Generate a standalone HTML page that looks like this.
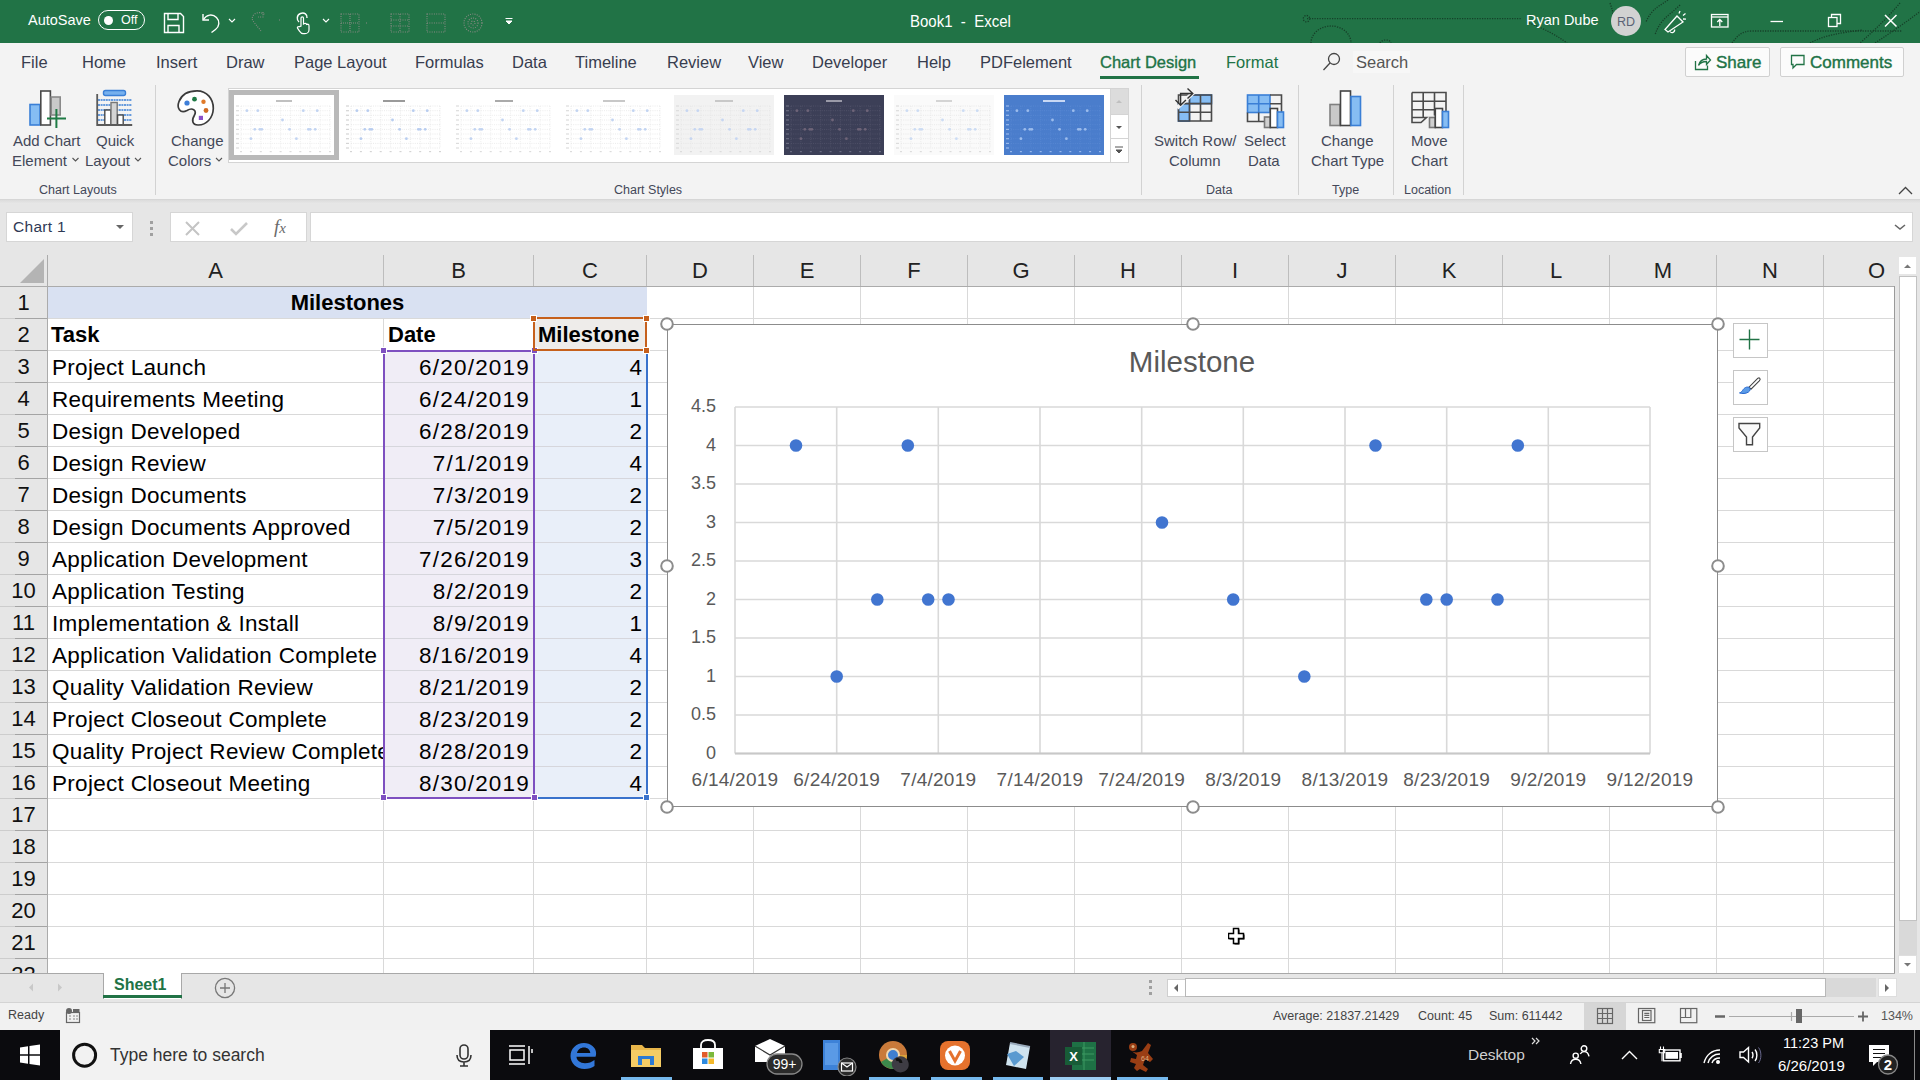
<!DOCTYPE html><html><head><meta charset="utf-8"><style>
*{margin:0;padding:0;box-sizing:border-box}
html,body{width:1920px;height:1080px;overflow:hidden;background:#fff;font-family:"Liberation Sans", sans-serif}
.a{position:absolute}
.t{position:absolute;white-space:nowrap;line-height:1}
</style></head><body><div class="a" style="left:0;top:0;width:1920px;height:43px;background:#217346"></div>
<div class="t" style="left:28px;top:13px;font-size:14.5px;color:#fff">AutoSave</div>
<div class="a" style="left:98px;top:10px;width:47px;height:20px;border:1.5px solid #fff;border-radius:10px"></div>
<div class="a" style="left:104px;top:15.5px;width:9px;height:9px;border-radius:50%;background:#fff"></div>
<div class="t" style="left:121px;top:14px;font-size:12.5px;color:#fff">Off</div>
<svg class="a" style="left:160px;top:8px" width="360" height="28" viewBox="160 8 360 28">
<g fill="none" stroke="#fff" stroke-width="1.4">
<path d="M164.5 13.5h16l3 3v16h-19z"/><path d="M168 13.5v6h10v-6"/><path d="M168 32.5v-7h11v7"/>
<path d="M203 14v6h6"/><path d="M203.5 19.5c3-5 9-6 13-2 3.5 3.5 3 9-1 12l-4 3"/>
<path d="M229 19l3 3 3-3" stroke-width="1.1"/>
<path d="M323 19l3 3 3-3" stroke-width="1.1"/>
<path d="M299 22c-2.5-2-2.5-7 1.5-8.5s7 1 6.5 4.5"/><path d="M301 26v-8c0-1.5 2.5-1.5 2.5 0v6l1-0.5c1-0.3 2 0 2 1l1-.3c1 0 1.5.6 1.5 1.5v4c0 2-1.5 4-4 4h-2c-1.5 0-2.5-1-3.5-2.5l-2-3c-.5-1 .5-2 1.5-1.3z" stroke-width="1.2"/>
</g>
<g fill="none" stroke="#9a8f8f" stroke-width="1.1" stroke-dasharray="1 1.3" opacity=".85">
<path d="M261 31l-8-10c-2-3 0-7 4-8 3-1 6 0 8 2"/><path d="M263 12v5h-5"/><path d="M279 20h2"/>
<rect x="341" y="14" width="18" height="18"/><path d="M341 23h18M350 14v18" stroke-dasharray="1 1"/>
<rect x="391" y="14" width="18" height="18"/><path d="M391 20h18M391 26h18M400 14v18"/>
<rect x="427" y="14" width="18" height="18"/><path d="M427 23h18"/>
<circle cx="473" cy="23" r="9"/><circle cx="473" cy="23" r="5"/><circle cx="473" cy="23" r="2"/>
<path d="M366 23h2"/>
</g>
<path d="M505.5 18.5h7M506 21h6l-3 3z" fill="#fff" stroke="#fff" stroke-width="1"/>
</svg>
<div class="t" style="left:910px;top:12.5px;font-size:15px;color:#fff;white-space:pre;transform:scaleY(1.1);transform-origin:0 0">Book1  -  Excel</div>
<svg class="a" style="left:1280px;top:0" width="640" height="43">
<g fill="none" stroke="#163f28" stroke-width="1.3" stroke-dasharray="1.2 1.3">
<path d="M27 18.7h215"/><circle cx="26.5" cy="18.7" r="3.2"/>
<path d="M31 43a20 17 0 0 1 40 0"/><path d="M100 43c2-4 10-4 11 0"/>
<path d="M388 0c-8 6-16 8-22 22M400 5c-10 10-20 14-25 30M330 3c2 6 4 10 2 16"/>
<path d="M247 22c10 4 25 10 40 21"/>
<path d="M452 43c6-8 10-12 20-12h150"/><path d="M620 3c-12 14-24 26-40 40"/><path d="M655 0c-20 16-40 30-60 43"/>
<path d="M530 43c15-8 30-10 52-13"/>
</g></svg>
<div class="t" style="left:1526px;top:13px;font-size:14.5px;color:#fff">Ryan Dube</div>
<div class="a" style="left:1611px;top:6px;width:30px;height:30px;border-radius:50%;background:#d2d2d2"></div>
<div class="t" style="left:1614px;top:16px;font-size:12.5px;color:#5b6275;width:24px;text-align:center">RD</div>
<svg class="a" style="left:1650px;top:0" width="270" height="43">
<g fill="none" stroke="#fff" stroke-width="1.3">
<path d="M15 29.5l12-13.5 6 6-15 10z"/><path d="M20 31.5a2.5 2.5 0 0 0 4.5-2"/><path d="M29 13.5l1-2.5M33 15.5l2.5-2M33 19l3 .2"/>
<rect x="61.5" y="14.5" width="16.5" height="12.5"/><path d="M61.5 17h16.5"/><path d="M69.8 26v-6.5M67.3 22l2.5-2.5 2.5 2.5"/>
<path d="M120.5 21.5h12.5"/>
<rect x="178.5" y="17.5" width="8.5" height="9"/><path d="M181.5 17.5v-3h9v9h-3.5"/>
<path d="M235 15l11.5 11.5M246.5 15l-11.5 11.5" stroke-width="1.5"/>
</g></svg>
<div class="a" style="left:0;top:43px;width:1920px;height:156px;background:#f3f3f3"></div>
<div class="t" style="left:21px;top:54px;font-size:16.5px;color:#383d4f">File</div>
<div class="t" style="left:82px;top:54px;font-size:16.5px;color:#383d4f">Home</div>
<div class="t" style="left:156px;top:54px;font-size:16.5px;color:#383d4f">Insert</div>
<div class="t" style="left:226px;top:54px;font-size:16.5px;color:#383d4f">Draw</div>
<div class="t" style="left:294px;top:54px;font-size:16.5px;color:#383d4f">Page Layout</div>
<div class="t" style="left:415px;top:54px;font-size:16.5px;color:#383d4f">Formulas</div>
<div class="t" style="left:512px;top:54px;font-size:16.5px;color:#383d4f">Data</div>
<div class="t" style="left:575px;top:54px;font-size:16.5px;color:#383d4f">Timeline</div>
<div class="t" style="left:667px;top:54px;font-size:16.5px;color:#383d4f">Review</div>
<div class="t" style="left:748px;top:54px;font-size:16.5px;color:#383d4f">View</div>
<div class="t" style="left:812px;top:54px;font-size:16.5px;color:#383d4f">Developer</div>
<div class="t" style="left:917px;top:54px;font-size:16.5px;color:#383d4f">Help</div>
<div class="t" style="left:980px;top:54px;font-size:16.5px;color:#383d4f">PDFelement</div>
<div class="t" style="left:1100px;top:54px;font-size:16.5px;color:#217346;-webkit-text-stroke:0.35px #217346">Chart Design</div>
<div class="a" style="left:1100px;top:76px;width:99px;height:3px;background:#217346"></div>
<div class="t" style="left:1226px;top:54px;font-size:16.5px;color:#217346">Format</div>
<svg class="a" style="left:1320px;top:50px" width="24" height="24"><g fill="none" stroke="#444" stroke-width="1.3"><circle cx="14" cy="9" r="5.5"/><path d="M10 13l-6.5 7"/></g></svg>
<div class="a" style="left:1353px;top:51px;width:57px;height:22px;background:#f7f7f7"></div>
<div class="t" style="left:1356px;top:54px;font-size:16.5px;color:#555">Search</div>
<div class="a" style="left:1685px;top:47px;width:85px;height:30px;border:1px solid #d0d0d0;background:#fbfbfb;border-radius:2px"></div>
<svg class="a" style="left:1692px;top:51px" width="22" height="22"><g fill="none" stroke="#217346" stroke-width="1.3"><path d="M3.5 10v8.5h12v-4"/><path d="M6.5 14.5c1-4 4-6.5 8-6.5V4.5l4 4.5-4 4.5v-3c-3.5 0-6.5 1.5-8 4z"/></g></svg>
<div class="t" style="left:1716px;top:54px;font-size:17px;color:#217346;-webkit-text-stroke:0.4px #217346">Share</div>
<div class="a" style="left:1780px;top:47px;width:124px;height:30px;border:1px solid #d0d0d0;background:#fbfbfb;border-radius:2px"></div>
<svg class="a" style="left:1789px;top:51px" width="22" height="22"><g fill="none" stroke="#217346" stroke-width="1.3"><path d="M2.5 4.5h12.5v9H7.5l-3.5 3.5v-3.5H2.5z"/></g></svg>
<div class="t" style="left:1810px;top:54px;font-size:17px;color:#217346;-webkit-text-stroke:0.4px #217346">Comments</div>
<div class="t" style="left:13px;top:133px;font-size:15px;color:#434859;">Add Chart</div>
<div class="t" style="left:12px;top:153px;font-size:15px;color:#434859;">Element</div>
<div class="t" style="left:96px;top:133px;font-size:15px;color:#434859;">Quick</div>
<div class="t" style="left:85px;top:153px;font-size:15px;color:#434859;">Layout</div>
<div class="t" style="left:171px;top:133px;font-size:15px;color:#434859;">Change</div>
<div class="t" style="left:168px;top:153px;font-size:15px;color:#434859;">Colors</div>
<div class="t" style="left:39px;top:184px;font-size:12.5px;color:#434859;">Chart Layouts</div>
<div class="t" style="left:614px;top:184px;font-size:12.5px;color:#434859;">Chart Styles</div>
<div class="t" style="left:1206px;top:184px;font-size:12.5px;color:#434859;">Data</div>
<div class="t" style="left:1332px;top:184px;font-size:12.5px;color:#434859;">Type</div>
<div class="t" style="left:1404px;top:184px;font-size:12.5px;color:#434859;">Location</div>
<div class="t" style="left:1154px;top:133px;font-size:15px;color:#434859;">Switch Row/</div>
<div class="t" style="left:1169px;top:153px;font-size:15px;color:#434859;">Column</div>
<div class="t" style="left:1244px;top:133px;font-size:15px;color:#434859;">Select</div>
<div class="t" style="left:1248px;top:153px;font-size:15px;color:#434859;">Data</div>
<div class="t" style="left:1321px;top:133px;font-size:15px;color:#434859;">Change</div>
<div class="t" style="left:1311px;top:153px;font-size:15px;color:#434859;">Chart Type</div>
<div class="t" style="left:1411px;top:133px;font-size:15px;color:#434859;">Move</div>
<div class="t" style="left:1411px;top:153px;font-size:15px;color:#434859;">Chart</div>
<svg class="a" style="left:0;top:84px" width="1920" height="116" viewBox="0 84 1920 116">
<g stroke-width="1.6">
<!-- Add chart element -->
<rect x="30" y="104.5" width="10" height="20.5" fill="#86bdf3" stroke="#3a7fd6"/>
<rect x="40.8" y="91" width="9.6" height="34" fill="#fff" stroke="#4a4a4a"/>
<rect x="51.2" y="97" width="9" height="18" fill="#c9c9c9" stroke="#8a8a8a"/>
<path d="M47 118.4h19M56.4 109v19" stroke="#1e7b45" stroke-width="2"/>
<!-- Quick layout -->
<rect x="103.5" y="90.5" width="22" height="5" rx="2" fill="#76b0ee" stroke="#3a7fd6" stroke-width="1.4"/>
<path d="M98 100h34M98 105h34M98 110h34M98 115h34M98 120h34" stroke="#3a7fd6" stroke-width="1.6" stroke-dasharray="2 0.6"/>
<rect x="104.8" y="110" width="6" height="15" fill="#fff" stroke="#4a4a4a" stroke-width="1.4"/>
<rect x="111" y="102.5" width="6.2" height="22.5" fill="#d4d4d4" stroke="#777" stroke-width="1.4"/>
<rect x="117.6" y="115" width="5.6" height="10" fill="#fff" stroke="#4a4a4a" stroke-width="1.4"/>
<path d="M97.2 94v31h35" fill="none" stroke="#5a5a5a" stroke-width="1.8"/>
<!-- Palette -->
<path d="M187 110.5C180 114 176.5 108 179 101.5C182 93.5 190 90.8 197 90.8C207 90.8 213.5 99 213.3 108.5C213 118.5 206 125 198.5 125C192 125.3 191.5 120 194.3 115.5C197 111 193 106.8 187 110.5Z" fill="#fff" stroke="#3b3b3b" stroke-width="1.7"/>
<circle cx="187" cy="103" r="2.6" fill="#3f7fd8" stroke="none"/>
<circle cx="194.5" cy="99.2" r="2.4" fill="#1f7a45" stroke="none"/>
<circle cx="203.5" cy="101.7" r="2.2" fill="#e07a2a" stroke="none"/>
<circle cx="206" cy="110.5" r="2.4" fill="#d06a22" stroke="none"/>
<rect x="198.8" y="115.8" width="4.2" height="4.2" fill="#8a4fc8" stroke="none"/>
<!-- separators -->
<path d="M155.5 85v110M1141.5 85v110M1298.5 85v110M1393.5 85v110M1463.5 85v110" stroke="#d2d2d2" stroke-width="1"/>
<!-- chevrons -->
<path d="M72.5 158l3 3 3-3" fill="none" stroke="#555" stroke-width="1.1"/><path d="M135 158l3 3 3-3" fill="none" stroke="#555" stroke-width="1.1"/><path d="M216 158l3 3 3-3" fill="none" stroke="#555" stroke-width="1.1"/>
<path d="M1899 194l6.5-6.5 6.5 6.5" fill="none" stroke="#444" stroke-width="1.3"/>
<!-- Switch row/column -->
<g stroke="#4a4a4a" stroke-width="1.6">
<rect x="1189.5" y="95" width="22" height="8.6" fill="#86bdf3" stroke="#3a7fd6"/>
<rect x="1178.5" y="103.6" width="11" height="17.5" fill="#86bdf3" stroke="#3a7fd6"/>
<path d="M1178.5 95h33v26h-33zM1189.5 95v26M1200.5 95v26M1178.5 103.6h33M1178.5 112.2h33" fill="none"/>
<path d="M1177 108l17-16" stroke="#f3f3f3" stroke-width="4"/>
<path d="M1180.6 105v-11.5h12.2M1187.5 88.5l5.3 5-5.3 5M1175.5 100l5.1 5.3 5.3-5.3" fill="none" stroke="#333" stroke-width="1.4"/>
<!-- select data -->
<rect x="1247.5" y="95" width="22.5" height="17.5" fill="#86bdf3" stroke="#3a7fd6"/>
<path d="M1258.7 95v17.5M1247.5 103.7h22.5" stroke="#3a7fd6"/>
<path d="M1270 95h11.5v17M1270 103.7h11.5M1247.5 112.5v9h17M1258.7 112.5v9" fill="none"/>
<rect x="1264.5" y="117" width="5.8" height="10.5" fill="#d0d0d0" stroke="#777"/>
<rect x="1270.3" y="108.5" width="7.2" height="19" fill="#fff" stroke="#444"/>
<rect x="1277.5" y="112" width="6" height="15.5" fill="#86bdf3" stroke="#3a7fd6"/>
<!-- change chart type -->
<rect x="1330" y="104.5" width="10" height="21" fill="#c9c9c9" stroke="#808080"/>
<rect x="1340.5" y="91" width="10" height="34.5" fill="#fff" stroke="#444"/>
<rect x="1351" y="96.5" width="9.5" height="29" fill="#86bdf3" stroke="#3a7fd6"/>
<!-- move chart -->
<path d="M1412 92.5h34v27M1412 92.5v30h9l5.5-5h-14.5M1423.2 92.5v25M1434.5 92.5v23M1412 101.2h34M1412 109.7h22" fill="none"/>
<rect x="1429.5" y="117.5" width="5.7" height="10" fill="#d0d0d0" stroke="#777"/>
<rect x="1435.3" y="108.5" width="7.2" height="19" fill="#fff" stroke="#444"/>
<rect x="1442.5" y="111.5" width="6" height="16" fill="#86bdf3" stroke="#3a7fd6"/>
</g>
</g>
</svg>
<div class="a" style="left:228px;top:88px;width:901px;height:75px;background:#fff;border:1px solid #d4d4d4"></div>
<div class="a" style="left:1110px;top:89px;width:18px;height:25px;background:#dcdcdc"></div>
<div class="a" style="left:1110px;top:89px;width:1px;height:73px;background:#d4d4d4"></div>
<div class="a" style="left:1110px;top:114px;width:18px;height:1px;background:#d4d4d4"></div>
<div class="a" style="left:1110px;top:138px;width:18px;height:1px;background:#d4d4d4"></div>
<svg class="a" style="left:1110px;top:89px" width="18" height="73"><path d="M6 14l3-3 3 3z" fill="#c0c0c0"/><path d="M6 37l3 3 3-3z" fill="#555"/><path d="M5 58h8M6 61l3 3 3-3z" fill="#555" stroke="#555" stroke-width="1"/></svg>
<div class="a" style="left:229px;top:90px;width:110px;height:70px;border:5px solid #b9b9b9"></div>
<svg class="a" style="left:234px;top:95px" width="100" height="60"><rect width="100" height="60" fill="#fff"/><rect x="42.0" y="5" width="16" height="2" fill="#c0c0c0"/><path d="M7 11.0h89" stroke="#e8e8e8" stroke-width="0.8" stroke-dasharray="1 1.2"/><rect x="2" y="10.4" width="3" height="1.2" fill="#dcdcdc"/><path d="M7 15.7h89" stroke="#e8e8e8" stroke-width="0.8" stroke-dasharray="1 1.2"/><rect x="2" y="15.1" width="3" height="1.2" fill="#dcdcdc"/><path d="M7 20.3h89" stroke="#e8e8e8" stroke-width="0.8" stroke-dasharray="1 1.2"/><rect x="2" y="19.7" width="3" height="1.2" fill="#dcdcdc"/><path d="M7 25.0h89" stroke="#e8e8e8" stroke-width="0.8" stroke-dasharray="1 1.2"/><rect x="2" y="24.4" width="3" height="1.2" fill="#dcdcdc"/><path d="M7 29.7h89" stroke="#e8e8e8" stroke-width="0.8" stroke-dasharray="1 1.2"/><rect x="2" y="29.1" width="3" height="1.2" fill="#dcdcdc"/><path d="M7 34.4h89" stroke="#e8e8e8" stroke-width="0.8" stroke-dasharray="1 1.2"/><rect x="2" y="33.8" width="3" height="1.2" fill="#dcdcdc"/><path d="M7 39.0h89" stroke="#e8e8e8" stroke-width="0.8" stroke-dasharray="1 1.2"/><rect x="2" y="38.4" width="3" height="1.2" fill="#dcdcdc"/><path d="M7 43.7h89" stroke="#e8e8e8" stroke-width="0.8" stroke-dasharray="1 1.2"/><rect x="2" y="43.1" width="3" height="1.2" fill="#dcdcdc"/><path d="M7 48.4h89" stroke="#e8e8e8" stroke-width="0.8" stroke-dasharray="1 1.2"/><rect x="2" y="47.8" width="3" height="1.2" fill="#dcdcdc"/><path d="M7 53.0h89" stroke="#e8e8e8" stroke-width="0.8" stroke-dasharray="1 1.2"/><rect x="2" y="52.4" width="3" height="1.2" fill="#dcdcdc"/><path d="M7.0 11v42" stroke="#e8e8e8" stroke-width="0.8" stroke-dasharray="1 1.2"/><rect x="6.0" y="56" width="2" height="1.2" fill="#dcdcdc"/><path d="M16.9 11v42" stroke="#e8e8e8" stroke-width="0.8" stroke-dasharray="1 1.2"/><rect x="15.9" y="56" width="2" height="1.2" fill="#dcdcdc"/><path d="M26.8 11v42" stroke="#e8e8e8" stroke-width="0.8" stroke-dasharray="1 1.2"/><rect x="25.8" y="56" width="2" height="1.2" fill="#dcdcdc"/><path d="M36.7 11v42" stroke="#e8e8e8" stroke-width="0.8" stroke-dasharray="1 1.2"/><rect x="35.7" y="56" width="2" height="1.2" fill="#dcdcdc"/><path d="M46.6 11v42" stroke="#e8e8e8" stroke-width="0.8" stroke-dasharray="1 1.2"/><rect x="45.6" y="56" width="2" height="1.2" fill="#dcdcdc"/><path d="M56.5 11v42" stroke="#e8e8e8" stroke-width="0.8" stroke-dasharray="1 1.2"/><rect x="55.5" y="56" width="2" height="1.2" fill="#dcdcdc"/><path d="M66.3 11v42" stroke="#e8e8e8" stroke-width="0.8" stroke-dasharray="1 1.2"/><rect x="65.3" y="56" width="2" height="1.2" fill="#dcdcdc"/><path d="M76.2 11v42" stroke="#e8e8e8" stroke-width="0.8" stroke-dasharray="1 1.2"/><rect x="75.2" y="56" width="2" height="1.2" fill="#dcdcdc"/><path d="M86.1 11v42" stroke="#e8e8e8" stroke-width="0.8" stroke-dasharray="1 1.2"/><rect x="85.1" y="56" width="2" height="1.2" fill="#dcdcdc"/><path d="M96.0 11v42" stroke="#e8e8e8" stroke-width="0.8" stroke-dasharray="1 1.2"/><rect x="95.0" y="56" width="2" height="1.2" fill="#dcdcdc"/><circle cx="12.9" cy="15.7" r="1.4" fill="#c2d4f2"/><circle cx="16.9" cy="43.7" r="1.4" fill="#c2d4f2"/><circle cx="20.8" cy="34.3" r="1.4" fill="#c2d4f2"/><circle cx="23.8" cy="15.7" r="1.4" fill="#c2d4f2"/><circle cx="25.8" cy="34.3" r="1.4" fill="#c2d4f2"/><circle cx="27.8" cy="34.3" r="1.4" fill="#c2d4f2"/><circle cx="48.5" cy="25.0" r="1.4" fill="#c2d4f2"/><circle cx="55.5" cy="34.3" r="1.4" fill="#c2d4f2"/><circle cx="62.4" cy="43.7" r="1.4" fill="#c2d4f2"/><circle cx="69.3" cy="15.7" r="1.4" fill="#c2d4f2"/><circle cx="74.3" cy="34.3" r="1.4" fill="#c2d4f2"/><circle cx="76.2" cy="34.3" r="1.4" fill="#c2d4f2"/><circle cx="81.2" cy="34.3" r="1.4" fill="#c2d4f2"/><circle cx="83.2" cy="15.7" r="1.4" fill="#c2d4f2"/></svg>
<svg class="a" style="left:344px;top:95px" width="100" height="60"><rect width="100" height="60" fill="#fff"/><rect x="39.0" y="5" width="22" height="2" fill="#9a9a9a"/><path d="M7 11.0h89" stroke="#e4e4e4" stroke-width="0.8" stroke-dasharray="1 1.2"/><rect x="2" y="10.4" width="3" height="1.2" fill="#d4d4d4"/><path d="M7 15.7h89" stroke="#e4e4e4" stroke-width="0.8" stroke-dasharray="1 1.2"/><rect x="2" y="15.1" width="3" height="1.2" fill="#d4d4d4"/><path d="M7 20.3h89" stroke="#e4e4e4" stroke-width="0.8" stroke-dasharray="1 1.2"/><rect x="2" y="19.7" width="3" height="1.2" fill="#d4d4d4"/><path d="M7 25.0h89" stroke="#e4e4e4" stroke-width="0.8" stroke-dasharray="1 1.2"/><rect x="2" y="24.4" width="3" height="1.2" fill="#d4d4d4"/><path d="M7 29.7h89" stroke="#e4e4e4" stroke-width="0.8" stroke-dasharray="1 1.2"/><rect x="2" y="29.1" width="3" height="1.2" fill="#d4d4d4"/><path d="M7 34.4h89" stroke="#e4e4e4" stroke-width="0.8" stroke-dasharray="1 1.2"/><rect x="2" y="33.8" width="3" height="1.2" fill="#d4d4d4"/><path d="M7 39.0h89" stroke="#e4e4e4" stroke-width="0.8" stroke-dasharray="1 1.2"/><rect x="2" y="38.4" width="3" height="1.2" fill="#d4d4d4"/><path d="M7 43.7h89" stroke="#e4e4e4" stroke-width="0.8" stroke-dasharray="1 1.2"/><rect x="2" y="43.1" width="3" height="1.2" fill="#d4d4d4"/><path d="M7 48.4h89" stroke="#e4e4e4" stroke-width="0.8" stroke-dasharray="1 1.2"/><rect x="2" y="47.8" width="3" height="1.2" fill="#d4d4d4"/><path d="M7 53.0h89" stroke="#e4e4e4" stroke-width="0.8" stroke-dasharray="1 1.2"/><rect x="2" y="52.4" width="3" height="1.2" fill="#d4d4d4"/><path d="M7.0 11v42" stroke="#e4e4e4" stroke-width="0.8" stroke-dasharray="1 1.2"/><rect x="6.0" y="56" width="2" height="1.2" fill="#d4d4d4"/><path d="M16.9 11v42" stroke="#e4e4e4" stroke-width="0.8" stroke-dasharray="1 1.2"/><rect x="15.9" y="56" width="2" height="1.2" fill="#d4d4d4"/><path d="M26.8 11v42" stroke="#e4e4e4" stroke-width="0.8" stroke-dasharray="1 1.2"/><rect x="25.8" y="56" width="2" height="1.2" fill="#d4d4d4"/><path d="M36.7 11v42" stroke="#e4e4e4" stroke-width="0.8" stroke-dasharray="1 1.2"/><rect x="35.7" y="56" width="2" height="1.2" fill="#d4d4d4"/><path d="M46.6 11v42" stroke="#e4e4e4" stroke-width="0.8" stroke-dasharray="1 1.2"/><rect x="45.6" y="56" width="2" height="1.2" fill="#d4d4d4"/><path d="M56.5 11v42" stroke="#e4e4e4" stroke-width="0.8" stroke-dasharray="1 1.2"/><rect x="55.5" y="56" width="2" height="1.2" fill="#d4d4d4"/><path d="M66.3 11v42" stroke="#e4e4e4" stroke-width="0.8" stroke-dasharray="1 1.2"/><rect x="65.3" y="56" width="2" height="1.2" fill="#d4d4d4"/><path d="M76.2 11v42" stroke="#e4e4e4" stroke-width="0.8" stroke-dasharray="1 1.2"/><rect x="75.2" y="56" width="2" height="1.2" fill="#d4d4d4"/><path d="M86.1 11v42" stroke="#e4e4e4" stroke-width="0.8" stroke-dasharray="1 1.2"/><rect x="85.1" y="56" width="2" height="1.2" fill="#d4d4d4"/><path d="M96.0 11v42" stroke="#e4e4e4" stroke-width="0.8" stroke-dasharray="1 1.2"/><rect x="95.0" y="56" width="2" height="1.2" fill="#d4d4d4"/><circle cx="12.9" cy="15.7" r="1.4" fill="#b8cdf0"/><circle cx="16.9" cy="43.7" r="1.4" fill="#b8cdf0"/><circle cx="20.8" cy="34.3" r="1.4" fill="#b8cdf0"/><circle cx="23.8" cy="15.7" r="1.4" fill="#b8cdf0"/><circle cx="25.8" cy="34.3" r="1.4" fill="#b8cdf0"/><circle cx="27.8" cy="34.3" r="1.4" fill="#b8cdf0"/><circle cx="48.5" cy="25.0" r="1.4" fill="#b8cdf0"/><circle cx="55.5" cy="34.3" r="1.4" fill="#b8cdf0"/><circle cx="62.4" cy="43.7" r="1.4" fill="#b8cdf0"/><circle cx="69.3" cy="15.7" r="1.4" fill="#b8cdf0"/><circle cx="74.3" cy="34.3" r="1.4" fill="#b8cdf0"/><circle cx="76.2" cy="34.3" r="1.4" fill="#b8cdf0"/><circle cx="81.2" cy="34.3" r="1.4" fill="#b8cdf0"/><circle cx="83.2" cy="15.7" r="1.4" fill="#b8cdf0"/></svg>
<svg class="a" style="left:454px;top:95px" width="100" height="60"><rect width="100" height="60" fill="#fff"/><rect x="41.0" y="5" width="18" height="2" fill="#aaaaaa"/><path d="M7 11.0h89" stroke="#e8e8e8" stroke-width="0.8" stroke-dasharray="1 1.2"/><rect x="2" y="10.4" width="3" height="1.2" fill="#dcdcdc"/><path d="M7 15.7h89" stroke="#e8e8e8" stroke-width="0.8" stroke-dasharray="1 1.2"/><rect x="2" y="15.1" width="3" height="1.2" fill="#dcdcdc"/><path d="M7 20.3h89" stroke="#e8e8e8" stroke-width="0.8" stroke-dasharray="1 1.2"/><rect x="2" y="19.7" width="3" height="1.2" fill="#dcdcdc"/><path d="M7 25.0h89" stroke="#e8e8e8" stroke-width="0.8" stroke-dasharray="1 1.2"/><rect x="2" y="24.4" width="3" height="1.2" fill="#dcdcdc"/><path d="M7 29.7h89" stroke="#e8e8e8" stroke-width="0.8" stroke-dasharray="1 1.2"/><rect x="2" y="29.1" width="3" height="1.2" fill="#dcdcdc"/><path d="M7 34.4h89" stroke="#e8e8e8" stroke-width="0.8" stroke-dasharray="1 1.2"/><rect x="2" y="33.8" width="3" height="1.2" fill="#dcdcdc"/><path d="M7 39.0h89" stroke="#e8e8e8" stroke-width="0.8" stroke-dasharray="1 1.2"/><rect x="2" y="38.4" width="3" height="1.2" fill="#dcdcdc"/><path d="M7 43.7h89" stroke="#e8e8e8" stroke-width="0.8" stroke-dasharray="1 1.2"/><rect x="2" y="43.1" width="3" height="1.2" fill="#dcdcdc"/><path d="M7 48.4h89" stroke="#e8e8e8" stroke-width="0.8" stroke-dasharray="1 1.2"/><rect x="2" y="47.8" width="3" height="1.2" fill="#dcdcdc"/><path d="M7 53.0h89" stroke="#e8e8e8" stroke-width="0.8" stroke-dasharray="1 1.2"/><rect x="2" y="52.4" width="3" height="1.2" fill="#dcdcdc"/><path d="M7.0 11v42" stroke="#e8e8e8" stroke-width="0.8" stroke-dasharray="1 1.2"/><rect x="6.0" y="56" width="2" height="1.2" fill="#dcdcdc"/><path d="M16.9 11v42" stroke="#e8e8e8" stroke-width="0.8" stroke-dasharray="1 1.2"/><rect x="15.9" y="56" width="2" height="1.2" fill="#dcdcdc"/><path d="M26.8 11v42" stroke="#e8e8e8" stroke-width="0.8" stroke-dasharray="1 1.2"/><rect x="25.8" y="56" width="2" height="1.2" fill="#dcdcdc"/><path d="M36.7 11v42" stroke="#e8e8e8" stroke-width="0.8" stroke-dasharray="1 1.2"/><rect x="35.7" y="56" width="2" height="1.2" fill="#dcdcdc"/><path d="M46.6 11v42" stroke="#e8e8e8" stroke-width="0.8" stroke-dasharray="1 1.2"/><rect x="45.6" y="56" width="2" height="1.2" fill="#dcdcdc"/><path d="M56.5 11v42" stroke="#e8e8e8" stroke-width="0.8" stroke-dasharray="1 1.2"/><rect x="55.5" y="56" width="2" height="1.2" fill="#dcdcdc"/><path d="M66.3 11v42" stroke="#e8e8e8" stroke-width="0.8" stroke-dasharray="1 1.2"/><rect x="65.3" y="56" width="2" height="1.2" fill="#dcdcdc"/><path d="M76.2 11v42" stroke="#e8e8e8" stroke-width="0.8" stroke-dasharray="1 1.2"/><rect x="75.2" y="56" width="2" height="1.2" fill="#dcdcdc"/><path d="M86.1 11v42" stroke="#e8e8e8" stroke-width="0.8" stroke-dasharray="1 1.2"/><rect x="85.1" y="56" width="2" height="1.2" fill="#dcdcdc"/><path d="M96.0 11v42" stroke="#e8e8e8" stroke-width="0.8" stroke-dasharray="1 1.2"/><rect x="95.0" y="56" width="2" height="1.2" fill="#dcdcdc"/><circle cx="12.9" cy="15.7" r="1.4" fill="#c2d4f2"/><circle cx="16.9" cy="43.7" r="1.4" fill="#c2d4f2"/><circle cx="20.8" cy="34.3" r="1.4" fill="#c2d4f2"/><circle cx="23.8" cy="15.7" r="1.4" fill="#c2d4f2"/><circle cx="25.8" cy="34.3" r="1.4" fill="#c2d4f2"/><circle cx="27.8" cy="34.3" r="1.4" fill="#c2d4f2"/><circle cx="48.5" cy="25.0" r="1.4" fill="#c2d4f2"/><circle cx="55.5" cy="34.3" r="1.4" fill="#c2d4f2"/><circle cx="62.4" cy="43.7" r="1.4" fill="#c2d4f2"/><circle cx="69.3" cy="15.7" r="1.4" fill="#c2d4f2"/><circle cx="74.3" cy="34.3" r="1.4" fill="#c2d4f2"/><circle cx="76.2" cy="34.3" r="1.4" fill="#c2d4f2"/><circle cx="81.2" cy="34.3" r="1.4" fill="#c2d4f2"/><circle cx="83.2" cy="15.7" r="1.4" fill="#c2d4f2"/></svg>
<svg class="a" style="left:564px;top:95px" width="100" height="60"><rect width="100" height="60" fill="#fff"/><rect x="39.0" y="5" width="22" height="2" fill="#c8c8c8"/><path d="M7 11.0h89" stroke="#e6e6e6" stroke-width="0.8" stroke-dasharray="1 1.2"/><rect x="2" y="10.4" width="3" height="1.2" fill="#dcdcdc"/><path d="M7 15.7h89" stroke="#e6e6e6" stroke-width="0.8" stroke-dasharray="1 1.2"/><rect x="2" y="15.1" width="3" height="1.2" fill="#dcdcdc"/><path d="M7 20.3h89" stroke="#e6e6e6" stroke-width="0.8" stroke-dasharray="1 1.2"/><rect x="2" y="19.7" width="3" height="1.2" fill="#dcdcdc"/><path d="M7 25.0h89" stroke="#e6e6e6" stroke-width="0.8" stroke-dasharray="1 1.2"/><rect x="2" y="24.4" width="3" height="1.2" fill="#dcdcdc"/><path d="M7 29.7h89" stroke="#e6e6e6" stroke-width="0.8" stroke-dasharray="1 1.2"/><rect x="2" y="29.1" width="3" height="1.2" fill="#dcdcdc"/><path d="M7 34.4h89" stroke="#e6e6e6" stroke-width="0.8" stroke-dasharray="1 1.2"/><rect x="2" y="33.8" width="3" height="1.2" fill="#dcdcdc"/><path d="M7 39.0h89" stroke="#e6e6e6" stroke-width="0.8" stroke-dasharray="1 1.2"/><rect x="2" y="38.4" width="3" height="1.2" fill="#dcdcdc"/><path d="M7 43.7h89" stroke="#e6e6e6" stroke-width="0.8" stroke-dasharray="1 1.2"/><rect x="2" y="43.1" width="3" height="1.2" fill="#dcdcdc"/><path d="M7 48.4h89" stroke="#e6e6e6" stroke-width="0.8" stroke-dasharray="1 1.2"/><rect x="2" y="47.8" width="3" height="1.2" fill="#dcdcdc"/><path d="M7 53.0h89" stroke="#e6e6e6" stroke-width="0.8" stroke-dasharray="1 1.2"/><rect x="2" y="52.4" width="3" height="1.2" fill="#dcdcdc"/><path d="M7.0 11v42" stroke="#e6e6e6" stroke-width="0.8" stroke-dasharray="1 1.2"/><rect x="6.0" y="56" width="2" height="1.2" fill="#dcdcdc"/><path d="M16.9 11v42" stroke="#e6e6e6" stroke-width="0.8" stroke-dasharray="1 1.2"/><rect x="15.9" y="56" width="2" height="1.2" fill="#dcdcdc"/><path d="M26.8 11v42" stroke="#e6e6e6" stroke-width="0.8" stroke-dasharray="1 1.2"/><rect x="25.8" y="56" width="2" height="1.2" fill="#dcdcdc"/><path d="M36.7 11v42" stroke="#e6e6e6" stroke-width="0.8" stroke-dasharray="1 1.2"/><rect x="35.7" y="56" width="2" height="1.2" fill="#dcdcdc"/><path d="M46.6 11v42" stroke="#e6e6e6" stroke-width="0.8" stroke-dasharray="1 1.2"/><rect x="45.6" y="56" width="2" height="1.2" fill="#dcdcdc"/><path d="M56.5 11v42" stroke="#e6e6e6" stroke-width="0.8" stroke-dasharray="1 1.2"/><rect x="55.5" y="56" width="2" height="1.2" fill="#dcdcdc"/><path d="M66.3 11v42" stroke="#e6e6e6" stroke-width="0.8" stroke-dasharray="1 1.2"/><rect x="65.3" y="56" width="2" height="1.2" fill="#dcdcdc"/><path d="M76.2 11v42" stroke="#e6e6e6" stroke-width="0.8" stroke-dasharray="1 1.2"/><rect x="75.2" y="56" width="2" height="1.2" fill="#dcdcdc"/><path d="M86.1 11v42" stroke="#e6e6e6" stroke-width="0.8" stroke-dasharray="1 1.2"/><rect x="85.1" y="56" width="2" height="1.2" fill="#dcdcdc"/><path d="M96.0 11v42" stroke="#e6e6e6" stroke-width="0.8" stroke-dasharray="1 1.2"/><rect x="95.0" y="56" width="2" height="1.2" fill="#dcdcdc"/><circle cx="12.9" cy="15.7" r="1.4" fill="#c2d4f2"/><circle cx="16.9" cy="43.7" r="1.4" fill="#c2d4f2"/><circle cx="20.8" cy="34.3" r="1.4" fill="#c2d4f2"/><circle cx="23.8" cy="15.7" r="1.4" fill="#c2d4f2"/><circle cx="25.8" cy="34.3" r="1.4" fill="#c2d4f2"/><circle cx="27.8" cy="34.3" r="1.4" fill="#c2d4f2"/><circle cx="48.5" cy="25.0" r="1.4" fill="#c2d4f2"/><circle cx="55.5" cy="34.3" r="1.4" fill="#c2d4f2"/><circle cx="62.4" cy="43.7" r="1.4" fill="#c2d4f2"/><circle cx="69.3" cy="15.7" r="1.4" fill="#c2d4f2"/><circle cx="74.3" cy="34.3" r="1.4" fill="#c2d4f2"/><circle cx="76.2" cy="34.3" r="1.4" fill="#c2d4f2"/><circle cx="81.2" cy="34.3" r="1.4" fill="#c2d4f2"/><circle cx="83.2" cy="15.7" r="1.4" fill="#c2d4f2"/></svg>
<svg class="a" style="left:674px;top:95px" width="100" height="60"><rect width="100" height="60" fill="#f2f2f2"/><rect x="41.0" y="5" width="18" height="2" fill="#c8c8c8"/><path d="M7 11.0h89" stroke="#e4e4e4" stroke-width="0.8" stroke-dasharray="1 1.2"/><rect x="2" y="10.4" width="3" height="1.2" fill="#dcdcdc"/><path d="M7 15.7h89" stroke="#e4e4e4" stroke-width="0.8" stroke-dasharray="1 1.2"/><rect x="2" y="15.1" width="3" height="1.2" fill="#dcdcdc"/><path d="M7 20.3h89" stroke="#e4e4e4" stroke-width="0.8" stroke-dasharray="1 1.2"/><rect x="2" y="19.7" width="3" height="1.2" fill="#dcdcdc"/><path d="M7 25.0h89" stroke="#e4e4e4" stroke-width="0.8" stroke-dasharray="1 1.2"/><rect x="2" y="24.4" width="3" height="1.2" fill="#dcdcdc"/><path d="M7 29.7h89" stroke="#e4e4e4" stroke-width="0.8" stroke-dasharray="1 1.2"/><rect x="2" y="29.1" width="3" height="1.2" fill="#dcdcdc"/><path d="M7 34.4h89" stroke="#e4e4e4" stroke-width="0.8" stroke-dasharray="1 1.2"/><rect x="2" y="33.8" width="3" height="1.2" fill="#dcdcdc"/><path d="M7 39.0h89" stroke="#e4e4e4" stroke-width="0.8" stroke-dasharray="1 1.2"/><rect x="2" y="38.4" width="3" height="1.2" fill="#dcdcdc"/><path d="M7 43.7h89" stroke="#e4e4e4" stroke-width="0.8" stroke-dasharray="1 1.2"/><rect x="2" y="43.1" width="3" height="1.2" fill="#dcdcdc"/><path d="M7 48.4h89" stroke="#e4e4e4" stroke-width="0.8" stroke-dasharray="1 1.2"/><rect x="2" y="47.8" width="3" height="1.2" fill="#dcdcdc"/><path d="M7 53.0h89" stroke="#e4e4e4" stroke-width="0.8" stroke-dasharray="1 1.2"/><rect x="2" y="52.4" width="3" height="1.2" fill="#dcdcdc"/><path d="M7.0 11v42" stroke="#e4e4e4" stroke-width="0.8" stroke-dasharray="1 1.2"/><rect x="6.0" y="56" width="2" height="1.2" fill="#dcdcdc"/><path d="M16.9 11v42" stroke="#e4e4e4" stroke-width="0.8" stroke-dasharray="1 1.2"/><rect x="15.9" y="56" width="2" height="1.2" fill="#dcdcdc"/><path d="M26.8 11v42" stroke="#e4e4e4" stroke-width="0.8" stroke-dasharray="1 1.2"/><rect x="25.8" y="56" width="2" height="1.2" fill="#dcdcdc"/><path d="M36.7 11v42" stroke="#e4e4e4" stroke-width="0.8" stroke-dasharray="1 1.2"/><rect x="35.7" y="56" width="2" height="1.2" fill="#dcdcdc"/><path d="M46.6 11v42" stroke="#e4e4e4" stroke-width="0.8" stroke-dasharray="1 1.2"/><rect x="45.6" y="56" width="2" height="1.2" fill="#dcdcdc"/><path d="M56.5 11v42" stroke="#e4e4e4" stroke-width="0.8" stroke-dasharray="1 1.2"/><rect x="55.5" y="56" width="2" height="1.2" fill="#dcdcdc"/><path d="M66.3 11v42" stroke="#e4e4e4" stroke-width="0.8" stroke-dasharray="1 1.2"/><rect x="65.3" y="56" width="2" height="1.2" fill="#dcdcdc"/><path d="M76.2 11v42" stroke="#e4e4e4" stroke-width="0.8" stroke-dasharray="1 1.2"/><rect x="75.2" y="56" width="2" height="1.2" fill="#dcdcdc"/><path d="M86.1 11v42" stroke="#e4e4e4" stroke-width="0.8" stroke-dasharray="1 1.2"/><rect x="85.1" y="56" width="2" height="1.2" fill="#dcdcdc"/><path d="M96.0 11v42" stroke="#e4e4e4" stroke-width="0.8" stroke-dasharray="1 1.2"/><rect x="95.0" y="56" width="2" height="1.2" fill="#dcdcdc"/><circle cx="12.9" cy="15.7" r="1.4" fill="#c6d6f2"/><circle cx="16.9" cy="43.7" r="1.4" fill="#c6d6f2"/><circle cx="20.8" cy="34.3" r="1.4" fill="#c6d6f2"/><circle cx="23.8" cy="15.7" r="1.4" fill="#c6d6f2"/><circle cx="25.8" cy="34.3" r="1.4" fill="#c6d6f2"/><circle cx="27.8" cy="34.3" r="1.4" fill="#c6d6f2"/><circle cx="48.5" cy="25.0" r="1.4" fill="#c6d6f2"/><circle cx="55.5" cy="34.3" r="1.4" fill="#c6d6f2"/><circle cx="62.4" cy="43.7" r="1.4" fill="#c6d6f2"/><circle cx="69.3" cy="15.7" r="1.4" fill="#c6d6f2"/><circle cx="74.3" cy="34.3" r="1.4" fill="#c6d6f2"/><circle cx="76.2" cy="34.3" r="1.4" fill="#c6d6f2"/><circle cx="81.2" cy="34.3" r="1.4" fill="#c6d6f2"/><circle cx="83.2" cy="15.7" r="1.4" fill="#c6d6f2"/></svg>
<svg class="a" style="left:784px;top:95px" width="100" height="60"><rect width="100" height="60" fill="#3c3f57"/><rect x="42.0" y="5" width="16" height="2" fill="#9a9aa8"/><path d="M7 11.0h89" stroke="#54566c" stroke-width="0.8" stroke-dasharray="1 1.2"/><rect x="2" y="10.4" width="3" height="1.2" fill="#6a6c80"/><path d="M7 15.7h89" stroke="#54566c" stroke-width="0.8" stroke-dasharray="1 1.2"/><rect x="2" y="15.1" width="3" height="1.2" fill="#6a6c80"/><path d="M7 20.3h89" stroke="#54566c" stroke-width="0.8" stroke-dasharray="1 1.2"/><rect x="2" y="19.7" width="3" height="1.2" fill="#6a6c80"/><path d="M7 25.0h89" stroke="#54566c" stroke-width="0.8" stroke-dasharray="1 1.2"/><rect x="2" y="24.4" width="3" height="1.2" fill="#6a6c80"/><path d="M7 29.7h89" stroke="#54566c" stroke-width="0.8" stroke-dasharray="1 1.2"/><rect x="2" y="29.1" width="3" height="1.2" fill="#6a6c80"/><path d="M7 34.4h89" stroke="#54566c" stroke-width="0.8" stroke-dasharray="1 1.2"/><rect x="2" y="33.8" width="3" height="1.2" fill="#6a6c80"/><path d="M7 39.0h89" stroke="#54566c" stroke-width="0.8" stroke-dasharray="1 1.2"/><rect x="2" y="38.4" width="3" height="1.2" fill="#6a6c80"/><path d="M7 43.7h89" stroke="#54566c" stroke-width="0.8" stroke-dasharray="1 1.2"/><rect x="2" y="43.1" width="3" height="1.2" fill="#6a6c80"/><path d="M7 48.4h89" stroke="#54566c" stroke-width="0.8" stroke-dasharray="1 1.2"/><rect x="2" y="47.8" width="3" height="1.2" fill="#6a6c80"/><path d="M7 53.0h89" stroke="#54566c" stroke-width="0.8" stroke-dasharray="1 1.2"/><rect x="2" y="52.4" width="3" height="1.2" fill="#6a6c80"/><path d="M7.0 11v42" stroke="#54566c" stroke-width="0.8" stroke-dasharray="1 1.2"/><rect x="6.0" y="56" width="2" height="1.2" fill="#6a6c80"/><path d="M16.9 11v42" stroke="#54566c" stroke-width="0.8" stroke-dasharray="1 1.2"/><rect x="15.9" y="56" width="2" height="1.2" fill="#6a6c80"/><path d="M26.8 11v42" stroke="#54566c" stroke-width="0.8" stroke-dasharray="1 1.2"/><rect x="25.8" y="56" width="2" height="1.2" fill="#6a6c80"/><path d="M36.7 11v42" stroke="#54566c" stroke-width="0.8" stroke-dasharray="1 1.2"/><rect x="35.7" y="56" width="2" height="1.2" fill="#6a6c80"/><path d="M46.6 11v42" stroke="#54566c" stroke-width="0.8" stroke-dasharray="1 1.2"/><rect x="45.6" y="56" width="2" height="1.2" fill="#6a6c80"/><path d="M56.5 11v42" stroke="#54566c" stroke-width="0.8" stroke-dasharray="1 1.2"/><rect x="55.5" y="56" width="2" height="1.2" fill="#6a6c80"/><path d="M66.3 11v42" stroke="#54566c" stroke-width="0.8" stroke-dasharray="1 1.2"/><rect x="65.3" y="56" width="2" height="1.2" fill="#6a6c80"/><path d="M76.2 11v42" stroke="#54566c" stroke-width="0.8" stroke-dasharray="1 1.2"/><rect x="75.2" y="56" width="2" height="1.2" fill="#6a6c80"/><path d="M86.1 11v42" stroke="#54566c" stroke-width="0.8" stroke-dasharray="1 1.2"/><rect x="85.1" y="56" width="2" height="1.2" fill="#6a6c80"/><path d="M96.0 11v42" stroke="#54566c" stroke-width="0.8" stroke-dasharray="1 1.2"/><rect x="95.0" y="56" width="2" height="1.2" fill="#6a6c80"/><circle cx="12.9" cy="15.7" r="1.4" fill="#6e6478"/><circle cx="16.9" cy="43.7" r="1.4" fill="#6e6478"/><circle cx="20.8" cy="34.3" r="1.4" fill="#6e6478"/><circle cx="23.8" cy="15.7" r="1.4" fill="#6e6478"/><circle cx="25.8" cy="34.3" r="1.4" fill="#6e6478"/><circle cx="27.8" cy="34.3" r="1.4" fill="#6e6478"/><circle cx="48.5" cy="25.0" r="1.4" fill="#6e6478"/><circle cx="55.5" cy="34.3" r="1.4" fill="#6e6478"/><circle cx="62.4" cy="43.7" r="1.4" fill="#6e6478"/><circle cx="69.3" cy="15.7" r="1.4" fill="#6e6478"/><circle cx="74.3" cy="34.3" r="1.4" fill="#6e6478"/><circle cx="76.2" cy="34.3" r="1.4" fill="#6e6478"/><circle cx="81.2" cy="34.3" r="1.4" fill="#6e6478"/><circle cx="83.2" cy="15.7" r="1.4" fill="#6e6478"/></svg>
<svg class="a" style="left:894px;top:95px" width="100" height="60"><rect width="100" height="60" fill="#fafafa"/><rect x="42.0" y="5" width="16" height="2" fill="#d4d4d4"/><path d="M7 11.0h89" stroke="#e6e6e6" stroke-width="0.8" stroke-dasharray="1 1.2"/><rect x="2" y="10.4" width="3" height="1.2" fill="#dcdcdc"/><path d="M7 15.7h89" stroke="#e6e6e6" stroke-width="0.8" stroke-dasharray="1 1.2"/><rect x="2" y="15.1" width="3" height="1.2" fill="#dcdcdc"/><path d="M7 20.3h89" stroke="#e6e6e6" stroke-width="0.8" stroke-dasharray="1 1.2"/><rect x="2" y="19.7" width="3" height="1.2" fill="#dcdcdc"/><path d="M7 25.0h89" stroke="#e6e6e6" stroke-width="0.8" stroke-dasharray="1 1.2"/><rect x="2" y="24.4" width="3" height="1.2" fill="#dcdcdc"/><path d="M7 29.7h89" stroke="#e6e6e6" stroke-width="0.8" stroke-dasharray="1 1.2"/><rect x="2" y="29.1" width="3" height="1.2" fill="#dcdcdc"/><path d="M7 34.4h89" stroke="#e6e6e6" stroke-width="0.8" stroke-dasharray="1 1.2"/><rect x="2" y="33.8" width="3" height="1.2" fill="#dcdcdc"/><path d="M7 39.0h89" stroke="#e6e6e6" stroke-width="0.8" stroke-dasharray="1 1.2"/><rect x="2" y="38.4" width="3" height="1.2" fill="#dcdcdc"/><path d="M7 43.7h89" stroke="#e6e6e6" stroke-width="0.8" stroke-dasharray="1 1.2"/><rect x="2" y="43.1" width="3" height="1.2" fill="#dcdcdc"/><path d="M7 48.4h89" stroke="#e6e6e6" stroke-width="0.8" stroke-dasharray="1 1.2"/><rect x="2" y="47.8" width="3" height="1.2" fill="#dcdcdc"/><path d="M7 53.0h89" stroke="#e6e6e6" stroke-width="0.8" stroke-dasharray="1 1.2"/><rect x="2" y="52.4" width="3" height="1.2" fill="#dcdcdc"/><path d="M7.0 11v42" stroke="#e6e6e6" stroke-width="0.8" stroke-dasharray="1 1.2"/><rect x="6.0" y="56" width="2" height="1.2" fill="#dcdcdc"/><path d="M16.9 11v42" stroke="#e6e6e6" stroke-width="0.8" stroke-dasharray="1 1.2"/><rect x="15.9" y="56" width="2" height="1.2" fill="#dcdcdc"/><path d="M26.8 11v42" stroke="#e6e6e6" stroke-width="0.8" stroke-dasharray="1 1.2"/><rect x="25.8" y="56" width="2" height="1.2" fill="#dcdcdc"/><path d="M36.7 11v42" stroke="#e6e6e6" stroke-width="0.8" stroke-dasharray="1 1.2"/><rect x="35.7" y="56" width="2" height="1.2" fill="#dcdcdc"/><path d="M46.6 11v42" stroke="#e6e6e6" stroke-width="0.8" stroke-dasharray="1 1.2"/><rect x="45.6" y="56" width="2" height="1.2" fill="#dcdcdc"/><path d="M56.5 11v42" stroke="#e6e6e6" stroke-width="0.8" stroke-dasharray="1 1.2"/><rect x="55.5" y="56" width="2" height="1.2" fill="#dcdcdc"/><path d="M66.3 11v42" stroke="#e6e6e6" stroke-width="0.8" stroke-dasharray="1 1.2"/><rect x="65.3" y="56" width="2" height="1.2" fill="#dcdcdc"/><path d="M76.2 11v42" stroke="#e6e6e6" stroke-width="0.8" stroke-dasharray="1 1.2"/><rect x="75.2" y="56" width="2" height="1.2" fill="#dcdcdc"/><path d="M86.1 11v42" stroke="#e6e6e6" stroke-width="0.8" stroke-dasharray="1 1.2"/><rect x="85.1" y="56" width="2" height="1.2" fill="#dcdcdc"/><path d="M96.0 11v42" stroke="#e6e6e6" stroke-width="0.8" stroke-dasharray="1 1.2"/><rect x="95.0" y="56" width="2" height="1.2" fill="#dcdcdc"/><circle cx="12.9" cy="15.7" r="1.4" fill="#ccdcf4"/><circle cx="16.9" cy="43.7" r="1.4" fill="#ccdcf4"/><circle cx="20.8" cy="34.3" r="1.4" fill="#ccdcf4"/><circle cx="23.8" cy="15.7" r="1.4" fill="#ccdcf4"/><circle cx="25.8" cy="34.3" r="1.4" fill="#ccdcf4"/><circle cx="27.8" cy="34.3" r="1.4" fill="#ccdcf4"/><circle cx="48.5" cy="25.0" r="1.4" fill="#ccdcf4"/><circle cx="55.5" cy="34.3" r="1.4" fill="#ccdcf4"/><circle cx="62.4" cy="43.7" r="1.4" fill="#ccdcf4"/><circle cx="69.3" cy="15.7" r="1.4" fill="#ccdcf4"/><circle cx="74.3" cy="34.3" r="1.4" fill="#ccdcf4"/><circle cx="76.2" cy="34.3" r="1.4" fill="#ccdcf4"/><circle cx="81.2" cy="34.3" r="1.4" fill="#ccdcf4"/><circle cx="83.2" cy="15.7" r="1.4" fill="#ccdcf4"/></svg>
<svg class="a" style="left:1004px;top:95px" width="100" height="60"><rect width="100" height="60" fill="#4a7dcc"/><rect x="39.0" y="5" width="22" height="2" fill="#c8d8f4"/><path d="M7 11.0h89" stroke="#5a8ad4" stroke-width="0.8" stroke-dasharray="1 1.2"/><rect x="2" y="10.4" width="3" height="1.2" fill="#98b8ea"/><path d="M7 15.7h89" stroke="#5a8ad4" stroke-width="0.8" stroke-dasharray="1 1.2"/><rect x="2" y="15.1" width="3" height="1.2" fill="#98b8ea"/><path d="M7 20.3h89" stroke="#5a8ad4" stroke-width="0.8" stroke-dasharray="1 1.2"/><rect x="2" y="19.7" width="3" height="1.2" fill="#98b8ea"/><path d="M7 25.0h89" stroke="#5a8ad4" stroke-width="0.8" stroke-dasharray="1 1.2"/><rect x="2" y="24.4" width="3" height="1.2" fill="#98b8ea"/><path d="M7 29.7h89" stroke="#5a8ad4" stroke-width="0.8" stroke-dasharray="1 1.2"/><rect x="2" y="29.1" width="3" height="1.2" fill="#98b8ea"/><path d="M7 34.4h89" stroke="#5a8ad4" stroke-width="0.8" stroke-dasharray="1 1.2"/><rect x="2" y="33.8" width="3" height="1.2" fill="#98b8ea"/><path d="M7 39.0h89" stroke="#5a8ad4" stroke-width="0.8" stroke-dasharray="1 1.2"/><rect x="2" y="38.4" width="3" height="1.2" fill="#98b8ea"/><path d="M7 43.7h89" stroke="#5a8ad4" stroke-width="0.8" stroke-dasharray="1 1.2"/><rect x="2" y="43.1" width="3" height="1.2" fill="#98b8ea"/><path d="M7 48.4h89" stroke="#5a8ad4" stroke-width="0.8" stroke-dasharray="1 1.2"/><rect x="2" y="47.8" width="3" height="1.2" fill="#98b8ea"/><path d="M7 53.0h89" stroke="#5a8ad4" stroke-width="0.8" stroke-dasharray="1 1.2"/><rect x="2" y="52.4" width="3" height="1.2" fill="#98b8ea"/><path d="M7.0 11v42" stroke="#5a8ad4" stroke-width="0.8" stroke-dasharray="1 1.2"/><rect x="6.0" y="56" width="2" height="1.2" fill="#98b8ea"/><path d="M16.9 11v42" stroke="#5a8ad4" stroke-width="0.8" stroke-dasharray="1 1.2"/><rect x="15.9" y="56" width="2" height="1.2" fill="#98b8ea"/><path d="M26.8 11v42" stroke="#5a8ad4" stroke-width="0.8" stroke-dasharray="1 1.2"/><rect x="25.8" y="56" width="2" height="1.2" fill="#98b8ea"/><path d="M36.7 11v42" stroke="#5a8ad4" stroke-width="0.8" stroke-dasharray="1 1.2"/><rect x="35.7" y="56" width="2" height="1.2" fill="#98b8ea"/><path d="M46.6 11v42" stroke="#5a8ad4" stroke-width="0.8" stroke-dasharray="1 1.2"/><rect x="45.6" y="56" width="2" height="1.2" fill="#98b8ea"/><path d="M56.5 11v42" stroke="#5a8ad4" stroke-width="0.8" stroke-dasharray="1 1.2"/><rect x="55.5" y="56" width="2" height="1.2" fill="#98b8ea"/><path d="M66.3 11v42" stroke="#5a8ad4" stroke-width="0.8" stroke-dasharray="1 1.2"/><rect x="65.3" y="56" width="2" height="1.2" fill="#98b8ea"/><path d="M76.2 11v42" stroke="#5a8ad4" stroke-width="0.8" stroke-dasharray="1 1.2"/><rect x="75.2" y="56" width="2" height="1.2" fill="#98b8ea"/><path d="M86.1 11v42" stroke="#5a8ad4" stroke-width="0.8" stroke-dasharray="1 1.2"/><rect x="85.1" y="56" width="2" height="1.2" fill="#98b8ea"/><path d="M96.0 11v42" stroke="#5a8ad4" stroke-width="0.8" stroke-dasharray="1 1.2"/><rect x="95.0" y="56" width="2" height="1.2" fill="#98b8ea"/><circle cx="12.9" cy="15.7" r="1.4" fill="#9cbcec"/><circle cx="16.9" cy="43.7" r="1.4" fill="#9cbcec"/><circle cx="20.8" cy="34.3" r="1.4" fill="#9cbcec"/><circle cx="23.8" cy="15.7" r="1.4" fill="#9cbcec"/><circle cx="25.8" cy="34.3" r="1.4" fill="#9cbcec"/><circle cx="27.8" cy="34.3" r="1.4" fill="#9cbcec"/><circle cx="48.5" cy="25.0" r="1.4" fill="#9cbcec"/><circle cx="55.5" cy="34.3" r="1.4" fill="#9cbcec"/><circle cx="62.4" cy="43.7" r="1.4" fill="#9cbcec"/><circle cx="69.3" cy="15.7" r="1.4" fill="#9cbcec"/><circle cx="74.3" cy="34.3" r="1.4" fill="#9cbcec"/><circle cx="76.2" cy="34.3" r="1.4" fill="#9cbcec"/><circle cx="81.2" cy="34.3" r="1.4" fill="#9cbcec"/><circle cx="83.2" cy="15.7" r="1.4" fill="#9cbcec"/></svg>
<div class="a" style="left:0;top:199px;width:1920px;height:1px;background:#d6d6d6"></div>
<div class="a" style="left:0;top:200px;width:1920px;height:4px;background:linear-gradient(#dcdcdc,#e8e8e8)"></div>
<div class="a" style="left:0;top:204px;width:1920px;height:51px;background:#e6e6e6"></div>
<div class="a" style="left:6px;top:212px;width:127px;height:30px;background:#fff;border:1px solid #d6d6d6"></div>
<div class="t" style="left:13px;top:219px;font-size:15.5px;letter-spacing:0.3px;color:#2f3a55">Chart 1</div>
<svg class="a" style="left:114px;top:222px" width="14" height="10"><path d="M2 3h8l-4 4z" fill="#666"/></svg>
<svg class="a" style="left:148px;top:218px" width="8" height="20"><rect x="2" y="3" width="3" height="3" fill="#a0a0a0"/><rect x="2" y="9" width="3" height="3" fill="#a0a0a0"/><rect x="2" y="15" width="3" height="3" fill="#a0a0a0"/></svg>
<div class="a" style="left:170px;top:212px;width:137px;height:30px;background:#fff;border:1px solid #d6d6d6"></div>
<svg class="a" style="left:180px;top:215px" width="120" height="24"><path d="M6 7l13 13M19 7l-13 13" stroke="#c4c4c4" stroke-width="2"/><path d="M51 14l5 5 11-11" fill="none" stroke="#c8c8c8" stroke-width="2.6"/></svg>
<div class="t" style="left:274px;top:217px;font-size:19px;color:#6a6a6a;font-family:'Liberation Serif',serif;font-style:italic">f<span style="font-size:15px">x</span></div>
<div class="a" style="left:310px;top:212px;width:1603px;height:30px;background:#fff;border:1px solid #d6d6d6"></div>
<svg class="a" style="left:1892px;top:220px" width="16" height="14"><path d="M3 5l5 4 5-4" fill="none" stroke="#666" stroke-width="1.6"/></svg>
<div class="a" style="left:0;top:255px;width:1895px;height:32px;background:#e6e6e6"></div>
<svg class="a" style="left:0;top:255px" width="48" height="32"><path d="M20 28h24V4z" fill="#b4b4b4"/></svg>
<div class="t" style="left:185.5px;top:260px;width:60px;text-align:center;font-size:22px;color:#222">A</div>
<div class="t" style="left:428.5px;top:260px;width:60px;text-align:center;font-size:22px;color:#222">B</div>
<div class="t" style="left:560.0px;top:260px;width:60px;text-align:center;font-size:22px;color:#222">C</div>
<div class="t" style="left:670.0px;top:260px;width:60px;text-align:center;font-size:22px;color:#222">D</div>
<div class="t" style="left:777.0px;top:260px;width:60px;text-align:center;font-size:22px;color:#222">E</div>
<div class="t" style="left:884.0px;top:260px;width:60px;text-align:center;font-size:22px;color:#222">F</div>
<div class="t" style="left:991.0px;top:260px;width:60px;text-align:center;font-size:22px;color:#222">G</div>
<div class="t" style="left:1098.0px;top:260px;width:60px;text-align:center;font-size:22px;color:#222">H</div>
<div class="t" style="left:1205.0px;top:260px;width:60px;text-align:center;font-size:22px;color:#222">I</div>
<div class="t" style="left:1312.0px;top:260px;width:60px;text-align:center;font-size:22px;color:#222">J</div>
<div class="t" style="left:1419.0px;top:260px;width:60px;text-align:center;font-size:22px;color:#222">K</div>
<div class="t" style="left:1526.0px;top:260px;width:60px;text-align:center;font-size:22px;color:#222">L</div>
<div class="t" style="left:1633.0px;top:260px;width:60px;text-align:center;font-size:22px;color:#222">M</div>
<div class="t" style="left:1740.0px;top:260px;width:60px;text-align:center;font-size:22px;color:#222">N</div>
<div class="t" style="left:1846.5px;top:260px;width:60px;text-align:center;font-size:22px;color:#222">O</div>
<div class="a" style="left:47px;top:255px;width:1px;height:31px;background:#bdbdbd"></div>
<div class="a" style="left:383px;top:255px;width:1px;height:31px;background:#bdbdbd"></div>
<div class="a" style="left:533px;top:255px;width:1px;height:31px;background:#bdbdbd"></div>
<div class="a" style="left:646px;top:255px;width:1px;height:31px;background:#bdbdbd"></div>
<div class="a" style="left:753px;top:255px;width:1px;height:31px;background:#bdbdbd"></div>
<div class="a" style="left:860px;top:255px;width:1px;height:31px;background:#bdbdbd"></div>
<div class="a" style="left:967px;top:255px;width:1px;height:31px;background:#bdbdbd"></div>
<div class="a" style="left:1074px;top:255px;width:1px;height:31px;background:#bdbdbd"></div>
<div class="a" style="left:1181px;top:255px;width:1px;height:31px;background:#bdbdbd"></div>
<div class="a" style="left:1288px;top:255px;width:1px;height:31px;background:#bdbdbd"></div>
<div class="a" style="left:1395px;top:255px;width:1px;height:31px;background:#bdbdbd"></div>
<div class="a" style="left:1502px;top:255px;width:1px;height:31px;background:#bdbdbd"></div>
<div class="a" style="left:1609px;top:255px;width:1px;height:31px;background:#bdbdbd"></div>
<div class="a" style="left:1716px;top:255px;width:1px;height:31px;background:#bdbdbd"></div>
<div class="a" style="left:1823px;top:255px;width:1px;height:31px;background:#bdbdbd"></div>
<div class="a" style="left:0;top:286px;width:1894px;height:1px;background:#ababab"></div>
<div class="a" style="left:0;top:287px;width:47px;height:686px;background:#e6e6e6"></div>
<div class="a" style="left:47px;top:255px;width:1px;height:718px;background:#ababab"></div>
<div class="t" style="left:0;top:292px;width:47px;text-align:center;font-size:22px;color:#111">1</div>
<div class="a" style="left:0;top:318px;width:15px;height:1px;background:#cdcdcd"></div>
<div class="a" style="left:15px;top:318px;width:32px;height:1px;background:#a4a4a4"></div>
<div class="t" style="left:0;top:324px;width:47px;text-align:center;font-size:22px;color:#111">2</div>
<div class="a" style="left:0;top:350px;width:15px;height:1px;background:#cdcdcd"></div>
<div class="a" style="left:15px;top:350px;width:32px;height:1px;background:#a4a4a4"></div>
<div class="t" style="left:0;top:356px;width:47px;text-align:center;font-size:22px;color:#111">3</div>
<div class="a" style="left:0;top:382px;width:15px;height:1px;background:#cdcdcd"></div>
<div class="a" style="left:15px;top:382px;width:32px;height:1px;background:#a4a4a4"></div>
<div class="t" style="left:0;top:388px;width:47px;text-align:center;font-size:22px;color:#111">4</div>
<div class="a" style="left:0;top:414px;width:15px;height:1px;background:#cdcdcd"></div>
<div class="a" style="left:15px;top:414px;width:32px;height:1px;background:#a4a4a4"></div>
<div class="t" style="left:0;top:420px;width:47px;text-align:center;font-size:22px;color:#111">5</div>
<div class="a" style="left:0;top:446px;width:15px;height:1px;background:#cdcdcd"></div>
<div class="a" style="left:15px;top:446px;width:32px;height:1px;background:#a4a4a4"></div>
<div class="t" style="left:0;top:452px;width:47px;text-align:center;font-size:22px;color:#111">6</div>
<div class="a" style="left:0;top:478px;width:15px;height:1px;background:#cdcdcd"></div>
<div class="a" style="left:15px;top:478px;width:32px;height:1px;background:#a4a4a4"></div>
<div class="t" style="left:0;top:484px;width:47px;text-align:center;font-size:22px;color:#111">7</div>
<div class="a" style="left:0;top:510px;width:15px;height:1px;background:#cdcdcd"></div>
<div class="a" style="left:15px;top:510px;width:32px;height:1px;background:#a4a4a4"></div>
<div class="t" style="left:0;top:516px;width:47px;text-align:center;font-size:22px;color:#111">8</div>
<div class="a" style="left:0;top:542px;width:15px;height:1px;background:#cdcdcd"></div>
<div class="a" style="left:15px;top:542px;width:32px;height:1px;background:#a4a4a4"></div>
<div class="t" style="left:0;top:548px;width:47px;text-align:center;font-size:22px;color:#111">9</div>
<div class="a" style="left:0;top:574px;width:15px;height:1px;background:#cdcdcd"></div>
<div class="a" style="left:15px;top:574px;width:32px;height:1px;background:#a4a4a4"></div>
<div class="t" style="left:0;top:580px;width:47px;text-align:center;font-size:22px;color:#111">10</div>
<div class="a" style="left:0;top:606px;width:15px;height:1px;background:#cdcdcd"></div>
<div class="a" style="left:15px;top:606px;width:32px;height:1px;background:#a4a4a4"></div>
<div class="t" style="left:0;top:612px;width:47px;text-align:center;font-size:22px;color:#111">11</div>
<div class="a" style="left:0;top:638px;width:15px;height:1px;background:#cdcdcd"></div>
<div class="a" style="left:15px;top:638px;width:32px;height:1px;background:#a4a4a4"></div>
<div class="t" style="left:0;top:644px;width:47px;text-align:center;font-size:22px;color:#111">12</div>
<div class="a" style="left:0;top:670px;width:15px;height:1px;background:#cdcdcd"></div>
<div class="a" style="left:15px;top:670px;width:32px;height:1px;background:#a4a4a4"></div>
<div class="t" style="left:0;top:676px;width:47px;text-align:center;font-size:22px;color:#111">13</div>
<div class="a" style="left:0;top:702px;width:15px;height:1px;background:#cdcdcd"></div>
<div class="a" style="left:15px;top:702px;width:32px;height:1px;background:#a4a4a4"></div>
<div class="t" style="left:0;top:708px;width:47px;text-align:center;font-size:22px;color:#111">14</div>
<div class="a" style="left:0;top:734px;width:15px;height:1px;background:#cdcdcd"></div>
<div class="a" style="left:15px;top:734px;width:32px;height:1px;background:#a4a4a4"></div>
<div class="t" style="left:0;top:740px;width:47px;text-align:center;font-size:22px;color:#111">15</div>
<div class="a" style="left:0;top:766px;width:15px;height:1px;background:#cdcdcd"></div>
<div class="a" style="left:15px;top:766px;width:32px;height:1px;background:#a4a4a4"></div>
<div class="t" style="left:0;top:772px;width:47px;text-align:center;font-size:22px;color:#111">16</div>
<div class="a" style="left:0;top:798px;width:15px;height:1px;background:#cdcdcd"></div>
<div class="a" style="left:15px;top:798px;width:32px;height:1px;background:#a4a4a4"></div>
<div class="t" style="left:0;top:804px;width:47px;text-align:center;font-size:22px;color:#111">17</div>
<div class="a" style="left:0;top:830px;width:15px;height:1px;background:#cdcdcd"></div>
<div class="a" style="left:15px;top:830px;width:32px;height:1px;background:#a4a4a4"></div>
<div class="t" style="left:0;top:836px;width:47px;text-align:center;font-size:22px;color:#111">18</div>
<div class="a" style="left:0;top:862px;width:15px;height:1px;background:#cdcdcd"></div>
<div class="a" style="left:15px;top:862px;width:32px;height:1px;background:#a4a4a4"></div>
<div class="t" style="left:0;top:868px;width:47px;text-align:center;font-size:22px;color:#111">19</div>
<div class="a" style="left:0;top:894px;width:15px;height:1px;background:#cdcdcd"></div>
<div class="a" style="left:15px;top:894px;width:32px;height:1px;background:#a4a4a4"></div>
<div class="t" style="left:0;top:900px;width:47px;text-align:center;font-size:22px;color:#111">20</div>
<div class="a" style="left:0;top:926px;width:15px;height:1px;background:#cdcdcd"></div>
<div class="a" style="left:15px;top:926px;width:32px;height:1px;background:#a4a4a4"></div>
<div class="t" style="left:0;top:932px;width:47px;text-align:center;font-size:22px;color:#111">21</div>
<div class="a" style="left:0;top:958px;width:15px;height:1px;background:#cdcdcd"></div>
<div class="a" style="left:15px;top:958px;width:32px;height:1px;background:#a4a4a4"></div>
<div class="t" style="left:0;top:964px;width:47px;text-align:center;font-size:22px;color:#111">22</div>
<div class="a" style="left:0;top:990px;width:15px;height:1px;background:#cdcdcd"></div>
<div class="a" style="left:15px;top:990px;width:32px;height:1px;background:#a4a4a4"></div>
<div class="a" style="left:48px;top:287px;width:1846px;height:686px;background:#fff"></div>
<svg class="a" style="left:0;top:0" width="1920" height="1080"><path d="M383.5 287V973M533.5 287V973M646.5 287V973M753.5 287V973M860.5 287V973M967.5 287V973M1074.5 287V973M1181.5 287V973M1288.5 287V973M1395.5 287V973M1502.5 287V973M1609.5 287V973M1716.5 287V973M1823.5 287V973M48 318.5H1894M48 350.5H1894M48 382.5H1894M48 414.5H1894M48 446.5H1894M48 478.5H1894M48 510.5H1894M48 542.5H1894M48 574.5H1894M48 606.5H1894M48 638.5H1894M48 670.5H1894M48 702.5H1894M48 734.5H1894M48 766.5H1894M48 798.5H1894M48 830.5H1894M48 862.5H1894M48 894.5H1894M48 926.5H1894M48 958.5H1894" stroke="#d9d9d9" stroke-width="1"/></svg>
<div class="a" style="left:1894px;top:286px;width:1px;height:687px;background:#9a9a9a"></div>
<div class="a" style="left:48px;top:287px;width:599px;height:31px;background:#d9e1f2"></div>
<div class="t" style="left:48px;top:292px;width:599px;text-align:center;font-size:22px;font-weight:bold;color:#000">Milestones</div>
<div class="a" style="left:384px;top:351px;width:149px;height:447px;background:#f0edf6"></div>
<div class="a" style="left:534px;top:351px;width:112px;height:447px;background:#e9eff9"></div>
<svg class="a" style="left:0;top:0" width="1920" height="1080"><path d="M384 382.5H646M384 414.5H646M384 446.5H646M384 478.5H646M384 510.5H646M384 542.5H646M384 574.5H646M384 606.5H646M384 638.5H646M384 670.5H646M384 702.5H646M384 734.5H646M384 766.5H646" stroke="#d6d6dc" stroke-width="1"/></svg>
<div class="a" style="left:534px;top:319px;width:112px;height:31px;background:#eeecea"></div>
<div class="t" style="left:51px;top:324px;font-size:22px;font-weight:bold;color:#000">Task</div>
<div class="t" style="left:388px;top:324px;font-size:22px;font-weight:bold;color:#000">Date</div>
<div class="t" style="left:538px;top:324px;font-size:22px;font-weight:bold;color:#000">Milestone</div>
<div class="t" style="left:52px;top:357px;width:331px;overflow:hidden;font-size:22.5px;color:#000;letter-spacing:0.3px">Project Launch</div>
<div class="t" style="left:383px;top:357px;width:147px;text-align:right;font-size:22.5px;color:#000;letter-spacing:1.2px">6/20/2019</div>
<div class="t" style="left:533px;top:357px;width:109px;text-align:right;font-size:22.5px;color:#000">4</div>
<div class="t" style="left:52px;top:389px;width:331px;overflow:hidden;font-size:22.5px;color:#000;letter-spacing:0.3px">Requirements Meeting</div>
<div class="t" style="left:383px;top:389px;width:147px;text-align:right;font-size:22.5px;color:#000;letter-spacing:1.2px">6/24/2019</div>
<div class="t" style="left:533px;top:389px;width:109px;text-align:right;font-size:22.5px;color:#000">1</div>
<div class="t" style="left:52px;top:421px;width:331px;overflow:hidden;font-size:22.5px;color:#000;letter-spacing:0.3px">Design Developed</div>
<div class="t" style="left:383px;top:421px;width:147px;text-align:right;font-size:22.5px;color:#000;letter-spacing:1.2px">6/28/2019</div>
<div class="t" style="left:533px;top:421px;width:109px;text-align:right;font-size:22.5px;color:#000">2</div>
<div class="t" style="left:52px;top:453px;width:331px;overflow:hidden;font-size:22.5px;color:#000;letter-spacing:0.3px">Design Review</div>
<div class="t" style="left:383px;top:453px;width:147px;text-align:right;font-size:22.5px;color:#000;letter-spacing:1.2px">7/1/2019</div>
<div class="t" style="left:533px;top:453px;width:109px;text-align:right;font-size:22.5px;color:#000">4</div>
<div class="t" style="left:52px;top:485px;width:331px;overflow:hidden;font-size:22.5px;color:#000;letter-spacing:0.3px">Design Documents</div>
<div class="t" style="left:383px;top:485px;width:147px;text-align:right;font-size:22.5px;color:#000;letter-spacing:1.2px">7/3/2019</div>
<div class="t" style="left:533px;top:485px;width:109px;text-align:right;font-size:22.5px;color:#000">2</div>
<div class="t" style="left:52px;top:517px;width:331px;overflow:hidden;font-size:22.5px;color:#000;letter-spacing:0.3px">Design Documents Approved</div>
<div class="t" style="left:383px;top:517px;width:147px;text-align:right;font-size:22.5px;color:#000;letter-spacing:1.2px">7/5/2019</div>
<div class="t" style="left:533px;top:517px;width:109px;text-align:right;font-size:22.5px;color:#000">2</div>
<div class="t" style="left:52px;top:549px;width:331px;overflow:hidden;font-size:22.5px;color:#000;letter-spacing:0.3px">Application Development</div>
<div class="t" style="left:383px;top:549px;width:147px;text-align:right;font-size:22.5px;color:#000;letter-spacing:1.2px">7/26/2019</div>
<div class="t" style="left:533px;top:549px;width:109px;text-align:right;font-size:22.5px;color:#000">3</div>
<div class="t" style="left:52px;top:581px;width:331px;overflow:hidden;font-size:22.5px;color:#000;letter-spacing:0.3px">Application Testing</div>
<div class="t" style="left:383px;top:581px;width:147px;text-align:right;font-size:22.5px;color:#000;letter-spacing:1.2px">8/2/2019</div>
<div class="t" style="left:533px;top:581px;width:109px;text-align:right;font-size:22.5px;color:#000">2</div>
<div class="t" style="left:52px;top:613px;width:331px;overflow:hidden;font-size:22.5px;color:#000;letter-spacing:0.3px">Implementation &amp; Install</div>
<div class="t" style="left:383px;top:613px;width:147px;text-align:right;font-size:22.5px;color:#000;letter-spacing:1.2px">8/9/2019</div>
<div class="t" style="left:533px;top:613px;width:109px;text-align:right;font-size:22.5px;color:#000">1</div>
<div class="t" style="left:52px;top:645px;width:331px;overflow:hidden;font-size:22.5px;color:#000;letter-spacing:0.3px">Application Validation Complete</div>
<div class="t" style="left:383px;top:645px;width:147px;text-align:right;font-size:22.5px;color:#000;letter-spacing:1.2px">8/16/2019</div>
<div class="t" style="left:533px;top:645px;width:109px;text-align:right;font-size:22.5px;color:#000">4</div>
<div class="t" style="left:52px;top:677px;width:331px;overflow:hidden;font-size:22.5px;color:#000;letter-spacing:0.3px">Quality Validation Review</div>
<div class="t" style="left:383px;top:677px;width:147px;text-align:right;font-size:22.5px;color:#000;letter-spacing:1.2px">8/21/2019</div>
<div class="t" style="left:533px;top:677px;width:109px;text-align:right;font-size:22.5px;color:#000">2</div>
<div class="t" style="left:52px;top:709px;width:331px;overflow:hidden;font-size:22.5px;color:#000;letter-spacing:0.3px">Project Closeout Complete</div>
<div class="t" style="left:383px;top:709px;width:147px;text-align:right;font-size:22.5px;color:#000;letter-spacing:1.2px">8/23/2019</div>
<div class="t" style="left:533px;top:709px;width:109px;text-align:right;font-size:22.5px;color:#000">2</div>
<div class="t" style="left:52px;top:741px;width:331px;overflow:hidden;font-size:22.5px;color:#000;letter-spacing:0.3px">Quality Project Review Complete</div>
<div class="t" style="left:383px;top:741px;width:147px;text-align:right;font-size:22.5px;color:#000;letter-spacing:1.2px">8/28/2019</div>
<div class="t" style="left:533px;top:741px;width:109px;text-align:right;font-size:22.5px;color:#000">2</div>
<div class="t" style="left:52px;top:773px;width:331px;overflow:hidden;font-size:22.5px;color:#000;letter-spacing:0.3px">Project Closeout Meeting</div>
<div class="t" style="left:383px;top:773px;width:147px;text-align:right;font-size:22.5px;color:#000;letter-spacing:1.2px">8/30/2019</div>
<div class="t" style="left:533px;top:773px;width:109px;text-align:right;font-size:22.5px;color:#000">4</div>
<div class="a" style="left:383px;top:350px;width:2px;height:449px;background:#7e50c0"></div>
<div class="a" style="left:383px;top:350px;width:151px;height:2px;background:#7e50c0"></div>
<div class="a" style="left:383px;top:797px;width:151px;height:2px;background:#7e50c0"></div>
<div class="a" style="left:533px;top:350px;width:2px;height:449px;background:#7e50c0"></div>
<div class="a" style="left:646px;top:351px;width:2px;height:448px;background:#3a72cc"></div>
<div class="a" style="left:534px;top:797px;width:113px;height:2px;background:#3a72cc"></div>
<div class="a" style="left:381px;top:348px;width:5px;height:5px;background:#7e50c0;outline:1px solid #fff"></div>
<div class="a" style="left:532px;top:348px;width:5px;height:5px;background:#7e50c0;outline:1px solid #fff"></div>
<div class="a" style="left:381px;top:795px;width:5px;height:5px;background:#7e50c0;outline:1px solid #fff"></div>
<div class="a" style="left:532px;top:795px;width:5px;height:5px;background:#7e50c0;outline:1px solid #fff"></div>
<div class="a" style="left:644px;top:795px;width:5px;height:5px;background:#3a72cc;outline:1px solid #fff"></div>
<div class="a" style="left:533px;top:317px;width:114px;height:34px;border:2px solid #c6601c"></div>
<div class="a" style="left:531px;top:316px;width:5px;height:5px;background:#c6601c;outline:1px solid #fff"></div>
<div class="a" style="left:644px;top:316px;width:5px;height:5px;background:#c6601c;outline:1px solid #fff"></div>
<div class="a" style="left:644px;top:348px;width:5px;height:5px;background:#c6601c;outline:1px solid #fff"></div>
<div class="a" style="left:667px;top:324px;width:1051px;height:483px;background:#fff;border:1px solid #8c8c8c"></div>
<div class="t" style="left:1092px;top:347px;width:200px;text-align:center;font-size:29.5px;color:#595959">Milestone</div>
<svg class="a" style="left:0;top:0" width="1920" height="1080"><path d="M735 407.0H1650M735 445.5H1650M735 484.0H1650M735 522.5H1650M735 561.0H1650M735 599.5H1650M735 638.0H1650M735 676.5H1650M735 715.0H1650M735 753.5H1650M735.0 407V753.5M836.7 407V753.5M938.3 407V753.5M1040.0 407V753.5M1141.7 407V753.5M1243.3 407V753.5M1345.0 407V753.5M1446.7 407V753.5M1548.3 407V753.5M1650.0 407V753.5" stroke="#d9d9d9" stroke-width="1.6"/><path d="M735 753.5H1650" stroke="#c8c8c8" stroke-width="1.8"/><circle cx="796.0" cy="445.5" r="6.3" fill="#4175d0"/><circle cx="836.7" cy="676.5" r="6.3" fill="#4175d0"/><circle cx="877.3" cy="599.5" r="6.3" fill="#4175d0"/><circle cx="907.8" cy="445.5" r="6.3" fill="#4175d0"/><circle cx="928.2" cy="599.5" r="6.3" fill="#4175d0"/><circle cx="948.5" cy="599.5" r="6.3" fill="#4175d0"/><circle cx="1162.0" cy="522.5" r="6.3" fill="#4175d0"/><circle cx="1233.2" cy="599.5" r="6.3" fill="#4175d0"/><circle cx="1304.3" cy="676.5" r="6.3" fill="#4175d0"/><circle cx="1375.5" cy="445.5" r="6.3" fill="#4175d0"/><circle cx="1426.3" cy="599.5" r="6.3" fill="#4175d0"/><circle cx="1446.7" cy="599.5" r="6.3" fill="#4175d0"/><circle cx="1497.5" cy="599.5" r="6.3" fill="#4175d0"/><circle cx="1517.8" cy="445.5" r="6.3" fill="#4175d0"/><circle cx="667" cy="324" r="5.8" fill="#fff" stroke="#8c8c8c" stroke-width="2"/><circle cx="1193" cy="324" r="5.8" fill="#fff" stroke="#8c8c8c" stroke-width="2"/><circle cx="1718" cy="324" r="5.8" fill="#fff" stroke="#8c8c8c" stroke-width="2"/><circle cx="667" cy="566" r="5.8" fill="#fff" stroke="#8c8c8c" stroke-width="2"/><circle cx="1718" cy="566" r="5.8" fill="#fff" stroke="#8c8c8c" stroke-width="2"/><circle cx="667" cy="807" r="5.8" fill="#fff" stroke="#8c8c8c" stroke-width="2"/><circle cx="1193" cy="807" r="5.8" fill="#fff" stroke="#8c8c8c" stroke-width="2"/><circle cx="1718" cy="807" r="5.8" fill="#fff" stroke="#8c8c8c" stroke-width="2"/></svg>
<div class="t" style="left:660px;top:743.9px;width:56px;text-align:right;font-size:18px;color:#595959">0</div>
<div class="t" style="left:660px;top:705.4px;width:56px;text-align:right;font-size:18px;color:#595959">0.5</div>
<div class="t" style="left:660px;top:666.9px;width:56px;text-align:right;font-size:18px;color:#595959">1</div>
<div class="t" style="left:660px;top:628.4px;width:56px;text-align:right;font-size:18px;color:#595959">1.5</div>
<div class="t" style="left:660px;top:589.9px;width:56px;text-align:right;font-size:18px;color:#595959">2</div>
<div class="t" style="left:660px;top:551.4px;width:56px;text-align:right;font-size:18px;color:#595959">2.5</div>
<div class="t" style="left:660px;top:512.9px;width:56px;text-align:right;font-size:18px;color:#595959">3</div>
<div class="t" style="left:660px;top:474.4px;width:56px;text-align:right;font-size:18px;color:#595959">3.5</div>
<div class="t" style="left:660px;top:435.9px;width:56px;text-align:right;font-size:18px;color:#595959">4</div>
<div class="t" style="left:660px;top:397.4px;width:56px;text-align:right;font-size:18px;color:#595959">4.5</div>
<div class="t" style="left:675.0px;top:770px;width:120px;text-align:center;font-size:19px;letter-spacing:0.25px;color:#595959">6/14/2019</div>
<div class="t" style="left:776.7px;top:770px;width:120px;text-align:center;font-size:19px;letter-spacing:0.25px;color:#595959">6/24/2019</div>
<div class="t" style="left:878.3px;top:770px;width:120px;text-align:center;font-size:19px;letter-spacing:0.25px;color:#595959">7/4/2019</div>
<div class="t" style="left:980.0px;top:770px;width:120px;text-align:center;font-size:19px;letter-spacing:0.25px;color:#595959">7/14/2019</div>
<div class="t" style="left:1081.7px;top:770px;width:120px;text-align:center;font-size:19px;letter-spacing:0.25px;color:#595959">7/24/2019</div>
<div class="t" style="left:1183.3px;top:770px;width:120px;text-align:center;font-size:19px;letter-spacing:0.25px;color:#595959">8/3/2019</div>
<div class="t" style="left:1285.0px;top:770px;width:120px;text-align:center;font-size:19px;letter-spacing:0.25px;color:#595959">8/13/2019</div>
<div class="t" style="left:1386.7px;top:770px;width:120px;text-align:center;font-size:19px;letter-spacing:0.25px;color:#595959">8/23/2019</div>
<div class="t" style="left:1488.3px;top:770px;width:120px;text-align:center;font-size:19px;letter-spacing:0.25px;color:#595959">9/2/2019</div>
<div class="t" style="left:1590.0px;top:770px;width:120px;text-align:center;font-size:19px;letter-spacing:0.25px;color:#595959">9/12/2019</div>
<div class="a" style="left:1733px;top:323px;width:35px;height:35px;background:#fff;border:1px solid #c6c6c6"></div>
<div class="a" style="left:1733px;top:370px;width:35px;height:35px;background:#fff;border:1px solid #c6c6c6"></div>
<div class="a" style="left:1733px;top:417px;width:35px;height:35px;background:#fff;border:1px solid #c6c6c6"></div>
<svg class="a" style="left:1733px;top:323px" width="35" height="130">
<path d="M6.5 16.5h20M16.5 6.5v20" stroke="#217346" stroke-width="1.4"/>
<path d="M26.8 55.3c-.7-.7-1.7-.4-2.6.5l-8.2 8.4 2 2 8.3-8.3c.8-.9 1.2-1.9.5-2.6z" fill="#fff" stroke="#444" stroke-width="1.1"/>
<path d="M16.3 64.5c-2.7-1.3-5.2.4-6.6 2.8-.9 1.5-2 2.3-3.2 2.6 2.6 1 6.5.9 9-.9 1.8-1.3 2.2-3 .8-4.5z" fill="#5a9be8" stroke="#2a6ad0" stroke-width="1"/>
<path d="M6 100.5h20.7v4.5l-7.2 9v7.7h-6V114L6 105z" fill="#fafafa" stroke="#444" stroke-width="1.4"/>
</svg>
<div class="a" style="left:1895px;top:255px;width:25px;height:718px;background:#e6e6e6"></div>
<div class="a" style="left:1899px;top:257px;width:17px;height:17px;background:#fff"></div>
<svg class="a" style="left:1899px;top:257px" width="17" height="17"><path d="M5 11l3.5-3.5 3.5 3.5z" fill="#777"/></svg>
<div class="a" style="left:1899px;top:276px;width:18px;height:645px;background:#fff;border:1px solid #c2c2c2"></div>
<div class="a" style="left:1899px;top:921px;width:18px;height:35px;background:#d9d9d9"></div>
<div class="a" style="left:1898px;top:955px;width:19px;height:19px;background:#fff;border:1px solid #dedede"></div>
<svg class="a" style="left:1899px;top:956px" width="17" height="17"><path d="M5 7l3.5 3.5 3.5-3.5z" fill="#777"/></svg>
<div class="a" style="left:0;top:973px;width:1920px;height:30px;background:#e6e6e6"></div>
<div class="a" style="left:0;top:973px;width:1895px;height:1px;background:#a8a8a8"></div>
<div class="a" style="left:0;top:1002px;width:1920px;height:1px;background:#d4d4d4"></div>
<svg class="a" style="left:20px;top:978px" width="60" height="20"><path d="M9 9.5l4-4v8z" fill="#c8c8c8"/><path d="M38 5.5l4 4-4 4z" fill="#c8c8c8"/></svg>
<div class="a" style="left:103px;top:973px;width:79px;height:26px;background:#fff;border-left:1px solid #a8a8a8;border-right:1px solid #a8a8a8"></div>
<div class="a" style="left:103px;top:995px;width:79px;height:3px;background:#217346"></div>
<div class="t" style="left:114px;top:977px;font-size:16px;font-weight:bold;color:#217346">Sheet1</div>
<svg class="a" style="left:213px;top:976px" width="24" height="24"><circle cx="12" cy="12" r="9.6" fill="none" stroke="#777" stroke-width="1.3"/><path d="M12 7v10M7 12h10" stroke="#777" stroke-width="1.3"/></svg>
<svg class="a" style="left:1146px;top:978px" width="10" height="18"><rect x="3" y="2" width="3" height="3" fill="#a0a0a0"/><rect x="3" y="8" width="3" height="3" fill="#a0a0a0"/><rect x="3" y="14" width="3" height="3" fill="#a0a0a0"/></svg>
<div class="a" style="left:1167px;top:979px;width:19px;height:18px;background:#fff;border:1px solid #cfcfcf"></div>
<svg class="a" style="left:1167px;top:979px" width="19" height="18"><path d="M11 5v8l-4-4z" fill="#666"/></svg>
<div class="a" style="left:1185px;top:978px;width:641px;height:19px;background:#fff;border:1px solid #b8b8b8"></div>
<div class="a" style="left:1826px;top:978px;width:50px;height:19px;background:#d9d9d9"></div>
<div class="a" style="left:1878px;top:978px;width:19px;height:19px;background:#fff;border:1px solid #dedede"></div>
<svg class="a" style="left:1878px;top:979px" width="18" height="18"><path d="M7 5v8l4-4z" fill="#666"/></svg>
<div class="a" style="left:0;top:1003px;width:1920px;height:27px;background:#f1f1f1"></div>
<div class="t" style="left:8px;top:1009px;font-size:12.5px;color:#444">Ready</div>
<svg class="a" style="left:64px;top:1006px" width="18" height="18"><circle cx="5" cy="5" r="3" fill="#666"/><rect x="2.5" y="6.5" width="13" height="10" fill="none" stroke="#666" stroke-width="1.2"/><rect x="9" y="3" width="6.5" height="3.5" fill="#666"/><path d="M5 10h2M9 10h2M12 10h2M5 13h2M9 13h2M12 13h2" stroke="#888" stroke-width="1"/></svg>
<div class="t" style="left:1273px;top:1010px;font-size:12.5px;color:#444;white-space:pre">Average: 21837.21429</div>
<div class="t" style="left:1418px;top:1010px;font-size:12.5px;color:#444">Count: 45</div>
<div class="t" style="left:1489px;top:1010px;font-size:12.5px;color:#444">Sum: 611442</div>
<div class="a" style="left:1584px;top:1003px;width:42px;height:27px;background:#d6d6d6"></div>
<svg class="a" style="left:1580px;top:1003px" width="340" height="27">
<g fill="none" stroke="#666" stroke-width="1.2">
<rect x="17.5" y="5.5" width="15" height="15"/><path d="M22.5 5.5v15M27.5 5.5v15M17.5 10.5h15M17.5 15.5h15"/>
<rect x="58.5" y="5.5" width="16.3" height="14.2"/><rect x="62.5" y="7.5" width="8.5" height="10"/><path d="M64.3 10.3h5M64.3 12.4h5M64.3 14.5h5"/>
<rect x="100.5" y="5.5" width="16.3" height="14.2"/><path d="M105.5 5.5v9h5.3v-9M100.5 14.5h5"/>
<path d="M135 13.5h10" stroke-width="2.5"/>
<path d="M149 13.5h125" stroke="#aaa" stroke-width="1"/><path d="M211.5 9v9" stroke="#aaa"/>
<path d="M278 13.5h10M283 8.5v10" stroke-width="1.8"/>
</g>
<rect x="216" y="6" width="6" height="14" fill="#666"/>
</svg>
<div class="t" style="left:1881px;top:1010px;font-size:12.5px;color:#555">134%</div>
<div class="a" style="left:0;top:1030px;width:1920px;height:50px;background:#0b0b0e"></div>
<svg class="a" style="left:18px;top:1044px" width="24" height="22"><path d="M2 3.5l8-1.2v8H2zM11.5 2.1L22 .6v9.7H11.5zM2 11.7h8v8L2 18.5zM11.5 11.7H22v9.7l-10.5-1.5z" fill="#fff"/></svg>
<div class="a" style="left:60px;top:1030px;width:430px;height:50px;background:#f2f2f2"></div>
<svg class="a" style="left:70px;top:1041px" width="30" height="30"><circle cx="14.6" cy="14.2" r="11" fill="none" stroke="#111" stroke-width="3"/></svg>
<div class="t" style="left:110px;top:1047px;font-size:17.5px;color:#333">Type here to search</div>
<svg class="a" style="left:454px;top:1043px" width="22" height="26"><rect x="6" y="2" width="8" height="14" rx="4" fill="none" stroke="#333" stroke-width="1.6"/><path d="M3 12c0 5 3 7 7 7s7-2 7-7M10 19v4M6 23h8" fill="none" stroke="#333" stroke-width="1.6"/></svg>
<svg class="a" style="left:506px;top:1044px" width="28" height="22"><g fill="none" stroke="#fff" stroke-width="1.5"><path d="M3 2h16M3 20h16"/><rect x="4" y="6" width="14" height="10"/><path d="M23 2v18M26 5v4"/></g></svg>
<svg class="a" style="left:568px;top:1041px" width="32" height="30"><path d="M16 2C8 2 2.5 8 2.5 15c0 7 6 13 14 13 4 0 7.5-1.2 10-3v-6c-2.5 2-6 3.3-9.5 3.3-5 0-8.5-3-8.5-6.5h19c.5-1.2.6-2.5.6-3.8C28.1 6.5 22.5 2 16 2zm-7 10c.8-3.3 3.5-5.5 7-5.5s6 2.2 6.3 5.5z" fill="#3277d8"/></svg>
<svg class="a" style="left:629px;top:1041px" width="34" height="28"><path d="M2 4h11l3 3h16v19H2z" fill="#e8b64a"/><path d="M2 9h30v17H2z" fill="#f5cc64"/><rect x="9" y="15" width="16" height="9" fill="#2d7bd4"/><rect x="13" y="18" width="8" height="6" fill="#f5cc64"/></svg>
<svg class="a" style="left:691px;top:1039px" width="34" height="32"><path d="M10 9V6c0-3.5 3-5 7-5s7 1.5 7 5v3" fill="none" stroke="#fff" stroke-width="1.8"/><rect x="2" y="9" width="30" height="21" fill="#fff"/><rect x="11" y="13" width="5.5" height="5.5" fill="#e25b2a"/><rect x="17.5" y="13" width="5.5" height="5.5" fill="#7bb83a"/><rect x="11" y="19.5" width="5.5" height="5.5" fill="#2d8ae0"/><rect x="17.5" y="19.5" width="5.5" height="5.5" fill="#f3b82a"/></svg>
<svg class="a" style="left:752px;top:1038px" width="52" height="38"><path d="M3 8l15-7 15 7v16H3z" fill="#fff"/><path d="M3 8l15 9 15-9" fill="none" stroke="#333" stroke-width="1.2"/><rect x="15" y="16" width="35" height="20" rx="10" fill="#2a2a2a" stroke="#888" stroke-width="1.3"/><text x="32.5" y="31" font-family="Liberation Sans" font-size="14" fill="#fff" text-anchor="middle">99+</text></svg>
<svg class="a" style="left:820px;top:1038px" width="42" height="38"><rect x="3" y="2" width="17" height="30" fill="#3d82d8"/><rect x="5" y="5" width="13" height="22" fill="#5a9ae6"/><circle cx="27" cy="29" r="9" fill="#2a2a2a" stroke="#888" stroke-width="1.2"/><rect x="21.5" y="25" width="11" height="8" fill="none" stroke="#fff" stroke-width="1.2"/><path d="M21.5 25l5.5 4 5.5-4" fill="none" stroke="#fff" stroke-width="1.1"/></svg>
<svg class="a" style="left:878px;top:1040px" width="36" height="34"><circle cx="15" cy="15" r="14" fill="#c97a3a"/><path d="M15 15L2.9 22A14 14 0 0 0 21 27.6z" fill="#3d8a4c"/><path d="M15 15h14A14 14 0 0 1 21 27.6z" fill="#d9a23a"/><circle cx="15" cy="15" r="6" fill="#3f7fd0" stroke="#f0d8b0" stroke-width="2"/><path d="M14 22c2-5 8-7 12-5 4 2 6 7 4 11-2 4-8 6-12 3-3-2-5-5-4-9z" fill="#3e3c44"/><path d="M18 20c2-1 5 0 5 3" stroke="#111" stroke-width="3" fill="none"/></svg>
<svg class="a" style="left:939px;top:1040px" width="34" height="32"><rect x="1" y="1" width="30" height="29" rx="8" fill="#e5722d"/><circle cx="16" cy="15.5" r="10" fill="#fff"/><path d="M10.5 11l5.5 10 5.5-10" fill="none" stroke="#e5722d" stroke-width="3"/></svg>
<svg class="a" style="left:1002px;top:1040px" width="32" height="32"><path d="M8 3l20 4-4 22-20-4z" fill="#cfe3ef"/><path d="M5 14l9-3 8 6-10 9z" fill="#5a9ad0"/><path d="M8 3l20 4" stroke="#9ab" stroke-width="2"/></svg>
<div class="a" style="left:1050px;top:1030px;width:61px;height:50px;background:#27232f"></div>
<svg class="a" style="left:1062px;top:1039px" width="36" height="34"><rect x="10" y="3" width="24" height="28" fill="#1e7145"/><path d="M12 9h20M12 15h20M12 21h20M22 3v28" stroke="#3d9a63" stroke-width="1"/><rect x="3" y="8" width="17" height="18" fill="#185c37"/><text x="11.5" y="22" font-family="Liberation Sans" font-weight="bold" font-size="13" fill="#fff" text-anchor="middle">X</text></svg>
<svg class="a" style="left:1124px;top:1040px" width="34" height="34"><g fill="#9a3e14"><circle cx="9" cy="7" r="4"/><path d="M6 10c3 3 8 3 12 1l6-8 3 2-3 8 5 6-3 3-5-3-2 6 5 4-2 3-6-3-3 2-3-3 2-4-6-2 1-4 5 1 1-4z"/></g><circle cx="9" cy="6.5" r="1.5" fill="#d8b080"/><text x="17" y="21" font-family="Liberation Sans" font-size="7" fill="#e0b080">64</text></svg>
<div class="a" style="left:621px;top:1077px;width:51px;height:3px;background:#76b9ed"></div>
<div class="a" style="left:869px;top:1077px;width:51px;height:3px;background:#76b9ed"></div>
<div class="a" style="left:931px;top:1077px;width:51px;height:3px;background:#76b9ed"></div>
<div class="a" style="left:993px;top:1077px;width:50px;height:3px;background:#76b9ed"></div>
<div class="a" style="left:1050px;top:1077px;width:61px;height:3px;background:#9ccdf3"></div>
<div class="a" style="left:1117px;top:1077px;width:51px;height:3px;background:#76b9ed"></div>
<div class="t" style="left:1468px;top:1047px;font-size:15.5px;color:#d0d0d0">Desktop</div>
<svg class="a" style="left:1530px;top:1036px" width="14" height="12"><path d="M2 2l3 3-3 3M6 2l3 3-3 3" fill="none" stroke="#ddd" stroke-width="1.2"/></svg>
<svg class="a" style="left:1566px;top:1042px" width="360" height="38"><g fill="none" stroke="#fff" stroke-width="1.4">
<circle cx="9.7" cy="13.7" r="2.6"/><path d="M4.5 22c.5-3 2.5-4.8 5.2-4.8s4.7 1.8 5.2 4.8"/><circle cx="18" cy="6.6" r="2.8"/><path d="M14.3 12c.8-1.6 2-2.4 3.7-2.4 2.6 0 4.5 2 5 4.8"/>
<path d="M56 17l7.5-7.5 7.5 7.5"/>
<rect x="97.5" y="8" width="16.5" height="10.8"/><rect x="99.5" y="10" width="12.5" height="6.8" fill="#fff" stroke="none"/><path d="M114.8 11v5" stroke-width="2"/><path d="M94.5 4.5v3M97.5 4.5v3M93.3 7.5h5.4v3.3h-5.4zM96 10.8v8.5" stroke-width="1.1"/>
<path d="M138 21c2-8 8-13 16-13M142 21c1.5-5 5.5-9 12-9M146 21c1-3 4-5 8-5"/><circle cx="152" cy="20" r="1.3" fill="#fff"/>
<path d="M174 10h3.5l5-4.5v14.5l-5-4.5H174z"/><path d="M186 10c1.3 1.6 1.3 4.6 0 6.2M189 7.5c2.5 2.8 2.5 8.7 0 11.5"/><path d="M192.5 5.5c3.2 4 3.2 11.5 0 15.5" stroke="#6a6a90" stroke-width="1"/>
</g></svg>
<div class="t" style="left:1783px;top:1036px;font-size:14.5px;color:#fff">11:23 PM</div>
<div class="t" style="left:1778px;top:1058px;font-size:15px;color:#fff">6/26/2019</div>
<svg class="a" style="left:1866px;top:1040px" width="40" height="40"><path d="M3 5h20v17H11l-4 4v-4H3z" fill="#fff"/><path d="M7 9.5h12M7 13.5h12M7 17.5h10" stroke="#111" stroke-width="1.2"/><circle cx="22" cy="24.5" r="9.5" fill="#222" stroke="#888" stroke-width="1.3"/><text x="22" y="30" font-family="Liberation Sans" font-weight="bold" font-size="15" fill="#fff" text-anchor="middle">2</text></svg>
<svg class="a" style="left:1228px;top:927px" width="19" height="19"><path d="M6.5 2.5h5v5h5v5h-5v5h-5v-5h-5v-5h5z" fill="#000"/><path d="M5.5 1.5h5v5h5v5h-5v5h-5v-5h-5v-5h5z" fill="#fff" stroke="#000" stroke-width="1.5"/></svg>
<div class="a" style="left:1914px;top:1030px;width:1px;height:50px;background:#8a8a8a"></div></body></html>
